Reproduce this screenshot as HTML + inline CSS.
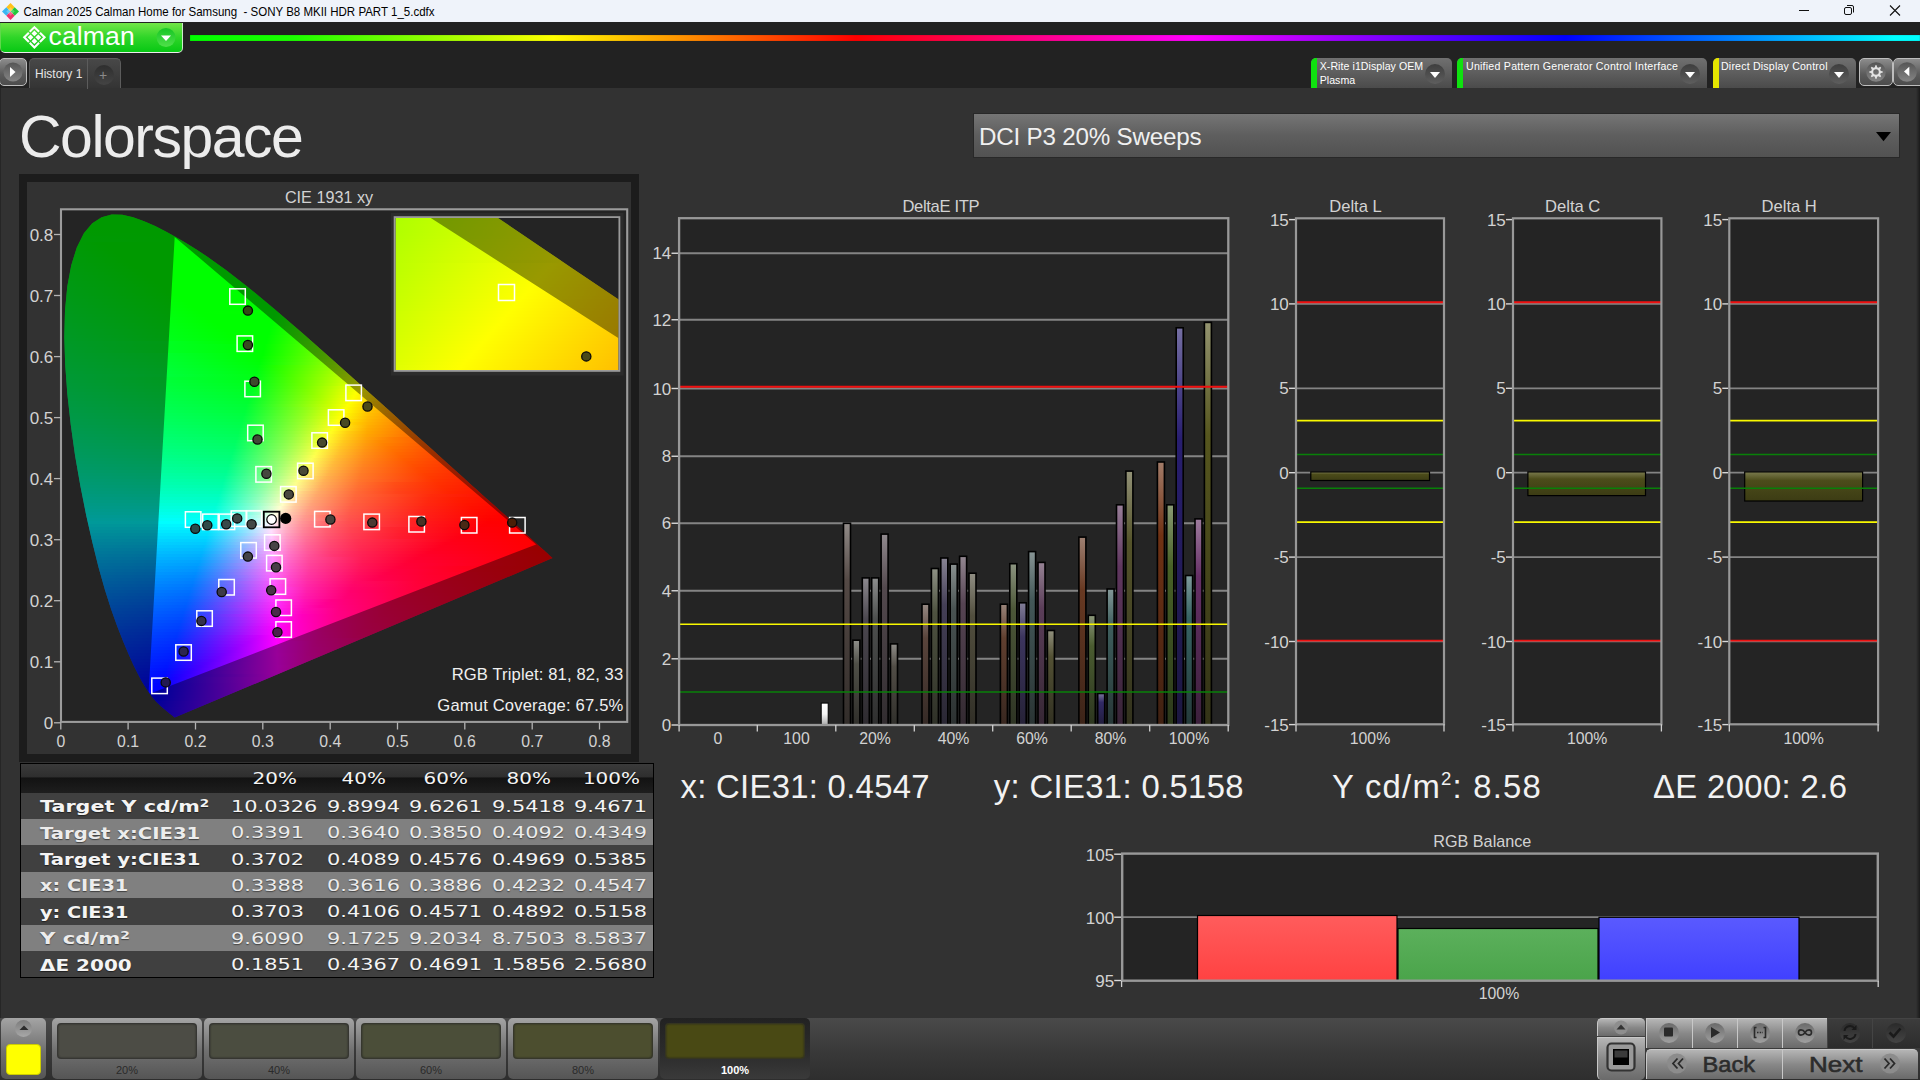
<!DOCTYPE html>
<html lang="en"><head><meta charset="utf-8"><title>Calman 2025 Calman Home for Samsung - SONY B8 MKII HDR PART 1_5.cdfx</title>
<style>
*{box-sizing:border-box}
html,body{margin:0;padding:0}
body{width:1920px;height:1080px;overflow:hidden;position:relative;background:#323232;font-family:"Liberation Sans",sans-serif;color:#eee}
.abs{position:absolute}
#titlebar{left:0;top:0;width:1920px;height:22.400px;background:#eff3fa;color:#000;font-size:12px}
#titlebar .t{position:absolute;left:24px;top:4px;white-space:pre;letter-spacing:0.1px}
#band{left:0;top:22.400px;width:1920px;height:65.600px;background:#222}
#rainbow{left:190px;top:35.200px;width:1730px;height:5.700px;background:linear-gradient(90deg,#0f0 0%,#1cff00 6%,#ff0 21%,#f00 38.500%,#f0f 58%,#00f 79.500%,#0ff 98.500%);box-shadow:0 0 1px rgba(0,0,0,.6) inset}
#calman{left:0;top:23px;width:183px;height:30px;border-radius:0 0 5px 5px;background:linear-gradient(#72e548,#2fd528 50%,#07c814);border-right:1px solid #cfeccb;border-bottom:1px solid #ececec;border-left:1px solid #5fd84a}
#calman .w{position:absolute;left:47.500px;top:-2.500px;font-size:26.500px;color:#fff;letter-spacing:0.150px}
.btn{border:1px solid #bdbdbd;border-radius:5px;background:linear-gradient(#8c8c8c,#5a5a5a 60%,#4c4c4c)}
.tab{top:58px;height:30px;border-radius:5px 5px 0 0;background:linear-gradient(#707070,#4b4b4b);font-size:11.3px;color:#fff;line-height:14px;overflow:hidden}
.tab i{position:absolute;left:0;top:0;bottom:0;width:6px}
.tab span{position:absolute;left:9px;top:1px;white-space:nowrap}
.circ{position:absolute;width:20px;height:20px;border-radius:10px;background:linear-gradient(#3e3e3e,#5e5e5e)}
.circ:after{content:"";position:absolute;left:5px;top:8px;border:5px solid transparent;border-top:6px solid #fff;border-bottom:0}
#hist{left:29px;top:58px;width:92px;height:30px;border:1px solid #5c5c5c;border-bottom:0;border-radius:5px 5px 0 0;background:linear-gradient(#484848,#343434);font-size:12px;color:#e6e6e6}
#heading{left:19px;top:102.800px;font-size:59px;color:#ececec;letter-spacing:-1.500px;white-space:nowrap}
#dd{left:972.500px;top:113px;width:927.500px;height:45px;background:linear-gradient(#757575,#5e5e5e 50%,#525252);border:1px solid #282828;font-size:24.200px;letter-spacing:-0.200px;color:#f0f0f0}
#dd span{position:absolute;left:5.500px;top:8.500px;white-space:nowrap}
#dd:after{content:"";position:absolute;left:1903px;}
svg{position:absolute;left:0;top:0;overflow:visible}
svg text{font-family:"Liberation Sans",sans-serif}
#bottom{left:0;top:1018px;width:1920px;height:62px;background:linear-gradient(#4a4a4a,#3a3a3a 50%,#2e2e2e)}
.sw{top:1018px;width:150px;height:61px;border-radius:5px;background:linear-gradient(#a4a4a4,#6f6f6f 55%,#555);font-size:10.5px;color:#2a2a2a;text-align:center}
.sw b{position:absolute;left:5px;top:5px;width:140px;height:36px;border-radius:4px;box-shadow:0 0 2px #222 inset;border:1px solid rgba(40,40,40,.6)}
.sw span{position:absolute;left:0;width:150px;top:46px;font-size:11px}.sw.sel span{font-weight:bold}
.sw.sel{background:linear-gradient(#222,#2c2c2c 60%,#3a3a3a);color:#fff}
.cb{position:absolute;border-radius:5px 5px 0 0;background:linear-gradient(#b5b5b5,#888 50%,#6a6a6a);border-left:1px solid #c8c8c8;border-top:1px solid #c8c8c8}
.cb.dk{background:linear-gradient(#3c3c3c,#2c2c2c);border-color:#444}
.cb .c{position:absolute;left:50%;top:50%;width:20px;height:20px;margin:-10.500px 0 0 -10.500px;border-radius:10px;background:linear-gradient(#6a6a6a,#a0a0a0)}
.cb.dk .c{background:linear-gradient(#2a2a2a,#444)}

table{border-collapse:collapse}
</style></head><body>
<div id="titlebar" class="abs"></div>
<svg width="1920" height="23" viewBox="0 0 1920 23">
<g transform="translate(10.5,11.5)"><path d="M0-8.5L4.2-4.2L0 0L-4.2-4.2Z" fill="#ffc21a"/><path d="M-8.5 0L-4.2-4.2L0 0L-4.2 4.2Z" fill="#39b6f2"/><path d="M8.5 0L4.2-4.2L0 0L4.2 4.2Z" fill="#22c83a"/><path d="M0 8.5L4.2 4.2L0 0L-4.2 4.2Z" fill="#f0306a"/>
<path d="M0-4.2L4.2 0L0 4.2L-4.2 0Z" fill="#fff" opacity=".25"/></g>
<text x="23.500" y="16" font-size="12.800" fill="#000" textLength="411" lengthAdjust="spacingAndGlyphs" xml:space="preserve">Calman 2025 Calman Home for Samsung  - SONY B8 MKII HDR PART 1_5.cdfx</text>
<path d="M1799 10.5H1809" stroke="#111" stroke-width="1" fill="none"/>
<rect x="1844.5" y="7.5" width="7" height="7" rx="1.5" stroke="#111" fill="none"/><path d="M1847 5.5H1852Q1853.5 5.5 1853.5 7V12.5" stroke="#111" fill="none"/>
<path d="M1890 5.5L1900 15.5M1900 5.5L1890 15.5" stroke="#111" stroke-width="1.1" fill="none"/>
</svg>
<div id="band" class="abs"></div>
<div id="rainbow" class="abs"></div>
<div id="calman" class="abs"><span class="w">calman</span></div>
<svg width="200" height="60" viewBox="0 0 200 60">
<g transform="translate(34.4,37.3) rotate(45)"><rect x="-7.200" y="-7.200" width="14.400" height="14.400" fill="none" stroke="#fff" stroke-width="2.100" stroke-dasharray="13.200 1.200" stroke-dashoffset="6.600"/>
<g fill="#fff"><rect x="-4.800" y="-4.800" width="4.100" height="4.100"/><rect x=".700" y="-4.800" width="4.100" height="4.100"/><rect x="-4.800" y=".700" width="4.100" height="4.100"/><rect x=".700" y=".700" width="4.100" height="4.100"/></g></g>
<defs><linearGradient id="cg" x1="0" y1="0" x2="0" y2="1"><stop offset="0" stop-color="#16c524"/><stop offset="1" stop-color="#4fe04a"/></linearGradient></defs>
<circle cx="166" cy="37.5" r="9.5" fill="url(#cg)"/><path d="M161 35.5H171L166 41Z" fill="#fff"/>
</svg>
<div class="abs btn" style="left:-1px;top:58px;width:28px;height:28px"></div>
<svg width="130" height="90" viewBox="0 0 130 90"><defs><linearGradient id="pc" x1="0" y1="0" x2="0" y2="1"><stop offset="0" stop-color="#555"/><stop offset="1" stop-color="#858585"/></linearGradient></defs><circle cx="13" cy="72" r="9.5" fill="url(#pc)"/><path d="M10 67L15.5 72L10 77Z" fill="#fff"/></svg>
<div id="hist" class="abs"><span style="position:absolute;left:5px;top:8px;white-space:nowrap">History 1</span><span style="position:absolute;left:57px;top:0;width:1px;height:30px;background:#5c5c5c"></span><span style="position:absolute;left:64px;top:6px;width:20px;height:20px;border-radius:10px;background:linear-gradient(#2e2e2e,#444)"></span><span style="position:absolute;left:69px;top:8px;color:#8a8a8a;font-size:14px">+</span></div>
<div class="abs tab" style="left:1311px;width:141px"><i style="background:#0fe20f"></i><div class="circ" style="left:114px;top:6px"></div></div>
<div class="abs tab" style="left:1457px;width:250px"><i style="background:#0fe20f"></i><div class="circ" style="left:223px;top:6px"></div></div>
<div class="abs tab" style="left:1713px;width:143px"><i style="background:#e6e600"></i><div class="circ" style="left:116px;top:6px"></div></div>
<svg width="1920" height="100" viewBox="0 0 1920 100" font-size="10.600" fill="#fff"><text x="1319.700" y="70" textLength="103.500">X-Rite i1Display OEM</text><text x="1319.700" y="84" textLength="35.500">Plasma</text><text x="1466" y="70" textLength="212">Unified Pattern Generator Control Interface</text><text x="1721" y="70" textLength="106.500">Direct Display Control</text></svg>
<div class="abs btn" style="left:1859px;top:58px;width:34px;height:28px"></div>
<div class="abs btn" style="left:1893px;top:58px;width:34px;height:28px"></div>
<svg width="1920" height="100" viewBox="0 0 1920 100"><circle cx="1876" cy="72" r="9.800" fill="url(#pc)"/><path transform="translate(1876,72)" d="M-1.10 -4.77L-0.70 -6.66L0.70 -6.66L1.10 -4.77L2.60 -4.16L4.22 -5.21L5.21 -4.22L4.16 -2.60L4.77 -1.10L6.66 -0.70L6.66 0.70L4.77 1.10L4.16 2.60L5.21 4.22L4.22 5.21L2.60 4.16L1.10 4.77L0.70 6.66L-0.70 6.66L-1.10 4.77L-2.60 4.16L-4.22 5.21L-5.21 4.22L-4.16 2.60L-4.77 1.10L-6.66 0.70L-6.66 -0.70L-4.77 -1.10L-4.16 -2.60L-5.21 -4.22L-4.22 -5.21L-2.60 -4.16Z M2.8 0A2.8 2.8 0 1 0 -2.8 0A2.8 2.8 0 1 0 2.8 0Z" fill="#e2e2e2" fill-rule="evenodd"/>
<circle cx="1907" cy="72" r="9.800" fill="url(#pc)"/><path d="M1909.300 66.800L1904 71.600L1909.300 76.200Z" fill="#fff"/></svg>
<div id="heading" class="abs">Colorspace</div>
<div id="dd" class="abs"><span>DCI P3 20% Sweeps</span></div>
<svg width="1920" height="200" viewBox="0 0 1920 200"><path d="M1876 132H1891L1883.5 141.3Z" fill="#000"/></svg>
<div class="abs" style="left:1916px;top:88px;width:4px;height:930px;background:linear-gradient(90deg,#323232,#1a1a1a)"></div>
<div class="abs" style="left:0;top:88px;width:1px;height:930px;background:#262626"></div>
<svg width="1920" height="1080" viewBox="0 0 1920 1080">
<rect x="19" y="174" width="620" height="588" fill="#1c1c1c"/>
<rect x="27" y="182" width="604" height="572" fill="#323232"/>
<rect x="61" y="209.500" width="566" height="512.500" fill="#242424"/>
<defs><linearGradient id="g0" gradientUnits="userSpaceOnUse" x1="106.7" x2="122.9" y1="0" y2="0"><stop offset="0" stop-color="#0f0"/><stop offset="1" stop-color="#0f0"/></linearGradient>
<linearGradient id="g1" gradientUnits="userSpaceOnUse" x1="97.8" x2="134.8" y1="0" y2="0"><stop offset="0" stop-color="#0f0"/><stop offset="1" stop-color="#0f0"/></linearGradient>
<linearGradient id="g2" gradientUnits="userSpaceOnUse" x1="92.9" x2="143.1" y1="0" y2="0"><stop offset="0" stop-color="#0f0"/><stop offset="1" stop-color="#0f0"/></linearGradient>
<linearGradient id="g3" gradientUnits="userSpaceOnUse" x1="89.2" x2="150.2" y1="0" y2="0"><stop offset="0" stop-color="#0f0"/><stop offset="1" stop-color="#0f0"/></linearGradient>
<linearGradient id="g4" gradientUnits="userSpaceOnUse" x1="86.3" x2="156.5" y1="0" y2="0"><stop offset="0" stop-color="#0f0"/><stop offset="1" stop-color="#0f0"/></linearGradient>
<linearGradient id="g5" gradientUnits="userSpaceOnUse" x1="84.0" x2="162.5" y1="0" y2="0"><stop offset="0" stop-color="#0f0"/><stop offset="1" stop-color="#0f0"/></linearGradient>
<linearGradient id="g6" gradientUnits="userSpaceOnUse" x1="81.8" x2="168.2" y1="0" y2="0"><stop offset="0" stop-color="#00ff02"/><stop offset="1" stop-color="#0f0"/></linearGradient>
<linearGradient id="g7" gradientUnits="userSpaceOnUse" x1="80.0" x2="173.7" y1="0" y2="0"><stop offset="0" stop-color="#00ff04"/><stop offset="1" stop-color="#0f0"/></linearGradient>
<linearGradient id="g8" gradientUnits="userSpaceOnUse" x1="78.3" x2="179.0" y1="0" y2="0"><stop offset="0" stop-color="#00ff06"/><stop offset="1" stop-color="#0f0"/></linearGradient>
<linearGradient id="g9" gradientUnits="userSpaceOnUse" x1="76.9" x2="184.1" y1="0" y2="0"><stop offset="0" stop-color="#00ff08"/><stop offset="1" stop-color="#0f0"/></linearGradient>
<linearGradient id="g10" gradientUnits="userSpaceOnUse" x1="75.5" x2="189.0" y1="0" y2="0"><stop offset="0" stop-color="#00ff0a"/><stop offset="0.257" stop-color="#0f0"/><stop offset="1" stop-color="#0f0"/></linearGradient>
<linearGradient id="g11" gradientUnits="userSpaceOnUse" x1="74.3" x2="193.8" y1="0" y2="0"><stop offset="0" stop-color="#00ff0c"/><stop offset="0.294" stop-color="#0f0"/><stop offset="1" stop-color="#0f0"/></linearGradient>
<linearGradient id="g12" gradientUnits="userSpaceOnUse" x1="73.2" x2="198.4" y1="0" y2="0"><stop offset="0" stop-color="#00ff0d"/><stop offset="0.32" stop-color="#0f0"/><stop offset="1" stop-color="#0f0"/></linearGradient>
<linearGradient id="g13" gradientUnits="userSpaceOnUse" x1="72.1" x2="202.9" y1="0" y2="0"><stop offset="0" stop-color="#00ff0f"/><stop offset="0.346" stop-color="#0f0"/><stop offset="1" stop-color="#0f0"/></linearGradient>
<linearGradient id="g14" gradientUnits="userSpaceOnUse" x1="71.2" x2="207.3" y1="0" y2="0"><stop offset="0" stop-color="#0f1"/><stop offset="0.368" stop-color="#0f0"/><stop offset="1" stop-color="#0f0"/></linearGradient>
<linearGradient id="g15" gradientUnits="userSpaceOnUse" x1="70.3" x2="211.7" y1="0" y2="0"><stop offset="0" stop-color="#00ff13"/><stop offset="0.39" stop-color="#0f0"/><stop offset="1" stop-color="#0f0"/></linearGradient>
<linearGradient id="g16" gradientUnits="userSpaceOnUse" x1="69.5" x2="215.9" y1="0" y2="0"><stop offset="0" stop-color="#00ff14"/><stop offset="0.411" stop-color="#0f0"/><stop offset="1" stop-color="#0f0"/></linearGradient>
<linearGradient id="g17" gradientUnits="userSpaceOnUse" x1="68.7" x2="220.0" y1="0" y2="0"><stop offset="0" stop-color="#00ff16"/><stop offset="0.43" stop-color="#0f0"/><stop offset="1" stop-color="#0f0"/></linearGradient>
<linearGradient id="g18" gradientUnits="userSpaceOnUse" x1="68.0" x2="224.1" y1="0" y2="0"><stop offset="0" stop-color="#00ff18"/><stop offset="0.449" stop-color="#0f0"/><stop offset="1" stop-color="#0f0"/></linearGradient>
<linearGradient id="g19" gradientUnits="userSpaceOnUse" x1="67.4" x2="228.1" y1="0" y2="0"><stop offset="0" stop-color="#00ff19"/><stop offset="0.469" stop-color="#0f0"/><stop offset="1" stop-color="#0f0"/></linearGradient>
<linearGradient id="g20" gradientUnits="userSpaceOnUse" x1="66.8" x2="232.1" y1="0" y2="0"><stop offset="0" stop-color="#00ff1b"/><stop offset="0.485" stop-color="#0f0"/><stop offset="1" stop-color="#0f0"/></linearGradient>
<linearGradient id="g21" gradientUnits="userSpaceOnUse" x1="66.2" x2="236.0" y1="0" y2="0"><stop offset="0" stop-color="#00ff1d"/><stop offset="0.497" stop-color="#0f0"/><stop offset="1" stop-color="#0f0"/></linearGradient>
<linearGradient id="g22" gradientUnits="userSpaceOnUse" x1="65.8" x2="239.8" y1="0" y2="0"><stop offset="0" stop-color="#00ff1e"/><stop offset="0.511" stop-color="#0f0"/><stop offset="1" stop-color="#0f0"/></linearGradient>
<linearGradient id="g23" gradientUnits="userSpaceOnUse" x1="65.3" x2="243.6" y1="0" y2="0"><stop offset="0" stop-color="#00ff20"/><stop offset="0.522" stop-color="#0f0"/><stop offset="1" stop-color="#0f0"/></linearGradient>
<linearGradient id="g24" gradientUnits="userSpaceOnUse" x1="64.8" x2="247.4" y1="0" y2="0"><stop offset="0" stop-color="#00ff21"/><stop offset="0.538" stop-color="#0f0"/><stop offset="1" stop-color="#0f0"/></linearGradient>
<linearGradient id="g25" gradientUnits="userSpaceOnUse" x1="64.5" x2="251.1" y1="0" y2="0"><stop offset="0" stop-color="#00ff23"/><stop offset="0.548" stop-color="#0f0"/><stop offset="1" stop-color="#0f0"/></linearGradient>
<linearGradient id="g26" gradientUnits="userSpaceOnUse" x1="64.1" x2="254.8" y1="0" y2="0"><stop offset="0" stop-color="#00ff25"/><stop offset="0.563" stop-color="#0f0"/><stop offset="1" stop-color="#0f0"/></linearGradient>
<linearGradient id="g27" gradientUnits="userSpaceOnUse" x1="63.8" x2="258.5" y1="0" y2="0"><stop offset="0" stop-color="#00ff26"/><stop offset="0.572" stop-color="#0f0"/><stop offset="1" stop-color="#0f0"/></linearGradient>
<linearGradient id="g28" gradientUnits="userSpaceOnUse" x1="63.5" x2="262.1" y1="0" y2="0"><stop offset="0" stop-color="#00ff28"/><stop offset="0.586" stop-color="#0f0"/><stop offset="1" stop-color="#0f0"/></linearGradient>
<linearGradient id="g29" gradientUnits="userSpaceOnUse" x1="63.3" x2="265.7" y1="0" y2="0"><stop offset="0" stop-color="#00ff2a"/><stop offset="0.594" stop-color="#0f0"/><stop offset="1" stop-color="#0f0"/></linearGradient>
<linearGradient id="g30" gradientUnits="userSpaceOnUse" x1="63.0" x2="269.3" y1="0" y2="0"><stop offset="0" stop-color="#00ff2b"/><stop offset="0.607" stop-color="#0f0"/><stop offset="1" stop-color="#0f0"/></linearGradient>
<linearGradient id="g31" gradientUnits="userSpaceOnUse" x1="62.8" x2="272.8" y1="0" y2="0"><stop offset="0" stop-color="#00ff2d"/><stop offset="0.614" stop-color="#0f0"/><stop offset="1" stop-color="#0f0"/></linearGradient>
<linearGradient id="g32" gradientUnits="userSpaceOnUse" x1="62.6" x2="276.4" y1="0" y2="0"><stop offset="0" stop-color="#00ff2f"/><stop offset="0.624" stop-color="#0f0"/><stop offset="1" stop-color="#0f0"/></linearGradient>
<linearGradient id="g33" gradientUnits="userSpaceOnUse" x1="62.5" x2="279.9" y1="0" y2="0"><stop offset="0" stop-color="#00ff30"/><stop offset="0.636" stop-color="#0f0"/><stop offset="1" stop-color="#03ff00"/></linearGradient>
<linearGradient id="g34" gradientUnits="userSpaceOnUse" x1="62.4" x2="283.4" y1="0" y2="0"><stop offset="0" stop-color="#00ff32"/><stop offset="0.643" stop-color="#0f0"/><stop offset="0.959" stop-color="#0f0"/><stop offset="1" stop-color="#0cff00"/></linearGradient>
<linearGradient id="g35" gradientUnits="userSpaceOnUse" x1="62.2" x2="286.9" y1="0" y2="0"><stop offset="0" stop-color="#00ff34"/><stop offset="0.652" stop-color="#0f0"/><stop offset="0.938" stop-color="#0f0"/><stop offset="1" stop-color="#14ff00"/></linearGradient>
<linearGradient id="g36" gradientUnits="userSpaceOnUse" x1="62.1" x2="290.4" y1="0" y2="0"><stop offset="0" stop-color="#00ff35"/><stop offset="0.662" stop-color="#0f0"/><stop offset="0.921" stop-color="#0f0"/><stop offset="1" stop-color="#1dff00"/></linearGradient>
<linearGradient id="g37" gradientUnits="userSpaceOnUse" x1="62.1" x2="293.9" y1="0" y2="0"><stop offset="0" stop-color="#00ff37"/><stop offset="0.671" stop-color="#0f0"/><stop offset="0.905" stop-color="#0f0"/><stop offset="1" stop-color="#25ff00"/></linearGradient>
<linearGradient id="g38" gradientUnits="userSpaceOnUse" x1="62.0" x2="297.3" y1="0" y2="0"><stop offset="0" stop-color="#00ff39"/><stop offset="0.677" stop-color="#0f0"/><stop offset="0.885" stop-color="#0f0"/><stop offset="1" stop-color="#2dff00"/></linearGradient>
<linearGradient id="g39" gradientUnits="userSpaceOnUse" x1="62.0" x2="300.7" y1="0" y2="0"><stop offset="0" stop-color="#00ff3b"/><stop offset="0.685" stop-color="#0f0"/><stop offset="0.87" stop-color="#0f0"/><stop offset="1" stop-color="#36ff00"/></linearGradient>
<linearGradient id="g40" gradientUnits="userSpaceOnUse" x1="62.0" x2="304.2" y1="0" y2="0"><stop offset="0" stop-color="#00ff3c"/><stop offset="0.694" stop-color="#0f0"/><stop offset="0.855" stop-color="#0f0"/><stop offset="1" stop-color="#3eff00"/></linearGradient>
<linearGradient id="g41" gradientUnits="userSpaceOnUse" x1="61.9" x2="307.6" y1="0" y2="0"><stop offset="0" stop-color="#00ff3e"/><stop offset="0.698" stop-color="#0f0"/><stop offset="0.837" stop-color="#0f0"/><stop offset="1" stop-color="#47ff00"/></linearGradient>
<linearGradient id="g42" gradientUnits="userSpaceOnUse" x1="62.0" x2="311.0" y1="0" y2="0"><stop offset="0" stop-color="#00ff40"/><stop offset="0.707" stop-color="#0f0"/><stop offset="0.823" stop-color="#0f0"/><stop offset="1" stop-color="#4fff00"/></linearGradient>
<linearGradient id="g43" gradientUnits="userSpaceOnUse" x1="62.0" x2="314.4" y1="0" y2="0"><stop offset="0" stop-color="#00ff42"/><stop offset="0.413" stop-color="#0f2"/><stop offset="0.714" stop-color="#0f0"/><stop offset="0.81" stop-color="#0f0"/><stop offset="1" stop-color="#58ff00"/></linearGradient>
<linearGradient id="g44" gradientUnits="userSpaceOnUse" x1="62.1" x2="317.8" y1="0" y2="0"><stop offset="0" stop-color="#0f4"/><stop offset="0.792" stop-color="#0f0"/><stop offset="1" stop-color="#62ff00"/></linearGradient>
<linearGradient id="g45" gradientUnits="userSpaceOnUse" x1="62.1" x2="321.2" y1="0" y2="0"><stop offset="0" stop-color="#00ff46"/><stop offset="0.78" stop-color="#0f0"/><stop offset="1" stop-color="#6bff00"/></linearGradient>
<linearGradient id="g46" gradientUnits="userSpaceOnUse" x1="62.2" x2="324.6" y1="0" y2="0"><stop offset="0" stop-color="#00ff48"/><stop offset="0.767" stop-color="#0f0"/><stop offset="1" stop-color="#75ff00"/></linearGradient>
<linearGradient id="g47" gradientUnits="userSpaceOnUse" x1="62.3" x2="328.0" y1="0" y2="0"><stop offset="0" stop-color="#00ff49"/><stop offset="0.411" stop-color="#00ff29"/><stop offset="0.755" stop-color="#0f0"/><stop offset="1" stop-color="#7fff00"/></linearGradient>
<linearGradient id="g48" gradientUnits="userSpaceOnUse" x1="62.4" x2="331.3" y1="0" y2="0"><stop offset="0" stop-color="#00ff4b"/><stop offset="0.425" stop-color="#00ff29"/><stop offset="0.739" stop-color="#00ff01"/><stop offset="1" stop-color="#89ff00"/></linearGradient>
<linearGradient id="g49" gradientUnits="userSpaceOnUse" x1="62.5" x2="334.7" y1="0" y2="0"><stop offset="0" stop-color="#00ff4d"/><stop offset="0.415" stop-color="#00ff2b"/><stop offset="0.728" stop-color="#00ff04"/><stop offset="1" stop-color="#93ff00"/></linearGradient>
<linearGradient id="g50" gradientUnits="userSpaceOnUse" x1="62.7" x2="338.1" y1="0" y2="0"><stop offset="0" stop-color="#00ff4f"/><stop offset="0.404" stop-color="#00ff2e"/><stop offset="0.716" stop-color="#00ff07"/><stop offset="1" stop-color="#9eff00"/></linearGradient>
<linearGradient id="g51" gradientUnits="userSpaceOnUse" x1="62.8" x2="341.4" y1="0" y2="0"><stop offset="0" stop-color="#00ff51"/><stop offset="0.392" stop-color="#00ff31"/><stop offset="0.701" stop-color="#00ff0b"/><stop offset="0.763" stop-color="#24ff00"/><stop offset="1" stop-color="#af0"/></linearGradient>
<linearGradient id="g52" gradientUnits="userSpaceOnUse" x1="63.0" x2="344.8" y1="0" y2="0"><stop offset="0" stop-color="#00ff53"/><stop offset="0.384" stop-color="#00ff34"/><stop offset="0.69" stop-color="#00ff0e"/><stop offset="0.769" stop-color="#2fff00"/><stop offset="1" stop-color="#b5ff00"/></linearGradient>
<linearGradient id="g53" gradientUnits="userSpaceOnUse" x1="63.2" x2="348.1" y1="0" y2="0"><stop offset="0" stop-color="#0f5"/><stop offset="0.377" stop-color="#00ff36"/><stop offset="0.68" stop-color="#0f1"/><stop offset="0.775" stop-color="#3aff00"/><stop offset="1" stop-color="#c1ff00"/></linearGradient>
<linearGradient id="g54" gradientUnits="userSpaceOnUse" x1="63.4" x2="351.5" y1="0" y2="0"><stop offset="0" stop-color="#00ff58"/><stop offset="0.368" stop-color="#00ff39"/><stop offset="0.67" stop-color="#01ff14"/><stop offset="0.781" stop-color="#46ff00"/><stop offset="1" stop-color="#ceff00"/></linearGradient>
<linearGradient id="g55" gradientUnits="userSpaceOnUse" x1="63.6" x2="354.8" y1="0" y2="0"><stop offset="0" stop-color="#00ff5a"/><stop offset="0.656" stop-color="#00ff17"/><stop offset="0.787" stop-color="#52ff00"/><stop offset="1" stop-color="#daff00"/></linearGradient>
<linearGradient id="g56" gradientUnits="userSpaceOnUse" x1="63.8" x2="358.2" y1="0" y2="0"><stop offset="0" stop-color="#00ff5c"/><stop offset="0.646" stop-color="#00ff1a"/><stop offset="0.789" stop-color="#5cff00"/><stop offset="1" stop-color="#e8ff00"/></linearGradient>
<linearGradient id="g57" gradientUnits="userSpaceOnUse" x1="64.0" x2="361.5" y1="0" y2="0"><stop offset="0" stop-color="#00ff5e"/><stop offset="0.636" stop-color="#00ff1d"/><stop offset="0.795" stop-color="#68ff00"/><stop offset="1" stop-color="#f6ff00"/></linearGradient>
<linearGradient id="g58" gradientUnits="userSpaceOnUse" x1="64.3" x2="364.9" y1="0" y2="0"><stop offset="0" stop-color="#00ff60"/><stop offset="0.627" stop-color="#00ff20"/><stop offset="0.8" stop-color="#75ff00"/><stop offset="0.983" stop-color="#feff00"/><stop offset="1" stop-color="#fffa00"/></linearGradient>
<linearGradient id="g59" gradientUnits="userSpaceOnUse" x1="64.5" x2="368.2" y1="0" y2="0"><stop offset="0" stop-color="#00ff62"/><stop offset="0.617" stop-color="#01ff23"/><stop offset="0.805" stop-color="#83ff00"/><stop offset="0.967" stop-color="#ff0"/><stop offset="1" stop-color="#ffec00"/></linearGradient>
<linearGradient id="g60" gradientUnits="userSpaceOnUse" x1="64.8" x2="371.5" y1="0" y2="0"><stop offset="0" stop-color="#00ff65"/><stop offset="0.605" stop-color="#00ff27"/><stop offset="0.81" stop-color="#90ff00"/><stop offset="0.948" stop-color="#fdff00"/><stop offset="1" stop-color="#ffdf00"/></linearGradient>
<linearGradient id="g61" gradientUnits="userSpaceOnUse" x1="65.1" x2="374.8" y1="0" y2="0"><stop offset="0" stop-color="#00ff67"/><stop offset="0.595" stop-color="#00ff2a"/><stop offset="0.816" stop-color="#9fff00"/><stop offset="0.932" stop-color="#feff00"/><stop offset="1" stop-color="#ffd300"/></linearGradient>
<linearGradient id="g62" gradientUnits="userSpaceOnUse" x1="65.4" x2="378.2" y1="0" y2="0"><stop offset="0" stop-color="#00ff69"/><stop offset="0.587" stop-color="#00ff2d"/><stop offset="0.817" stop-color="#abff00"/><stop offset="0.917" stop-color="#ff0"/><stop offset="1" stop-color="#ffc800"/></linearGradient>
<linearGradient id="g63" gradientUnits="userSpaceOnUse" x1="65.7" x2="381.5" y1="0" y2="0"><stop offset="0" stop-color="#00ff6c"/><stop offset="0.578" stop-color="#00ff30"/><stop offset="0.822" stop-color="#bf0"/><stop offset="0.902" stop-color="#fffe00"/><stop offset="0.962" stop-color="#ffd000"/><stop offset="1" stop-color="#ffbe00"/></linearGradient>
<linearGradient id="g64" gradientUnits="userSpaceOnUse" x1="66.0" x2="384.8" y1="0" y2="0"><stop offset="0" stop-color="#00ff6e"/><stop offset="0.566" stop-color="#00ff34"/><stop offset="0.827" stop-color="#cbff00"/><stop offset="0.884" stop-color="#feff00"/><stop offset="0.953" stop-color="#ffcb00"/><stop offset="1" stop-color="#ffb400"/></linearGradient>
<linearGradient id="g65" gradientUnits="userSpaceOnUse" x1="66.3" x2="388.1" y1="0" y2="0"><stop offset="0" stop-color="#00ff71"/><stop offset="0.558" stop-color="#00ff37"/><stop offset="0.748" stop-color="#94ff15"/><stop offset="0.832" stop-color="#dcff00"/><stop offset="0.869" stop-color="#feff00"/><stop offset="0.941" stop-color="#ffc800"/><stop offset="1" stop-color="#ffab00"/></linearGradient>
<linearGradient id="g66" gradientUnits="userSpaceOnUse" x1="66.6" x2="391.4" y1="0" y2="0"><stop offset="0" stop-color="#00ff73"/><stop offset="0.549" stop-color="#00ff3a"/><stop offset="0.735" stop-color="#94ff1a"/><stop offset="0.855" stop-color="#ff0"/><stop offset="0.929" stop-color="#ffc400"/><stop offset="1" stop-color="#ffa200"/></linearGradient>
<linearGradient id="g67" gradientUnits="userSpaceOnUse" x1="66.9" x2="394.8" y1="0" y2="0"><stop offset="0" stop-color="#00ff76"/><stop offset="0.541" stop-color="#00ff3e"/><stop offset="0.725" stop-color="#96ff1d"/><stop offset="0.838" stop-color="#fdff01"/><stop offset="0.92" stop-color="#ffbf00"/><stop offset="1" stop-color="#f90"/></linearGradient>
<linearGradient id="g68" gradientUnits="userSpaceOnUse" x1="67.3" x2="398.1" y1="0" y2="0"><stop offset="0" stop-color="#00ff78"/><stop offset="0.53" stop-color="#00ff42"/><stop offset="0.706" stop-color="#90ff23"/><stop offset="0.824" stop-color="#feff06"/><stop offset="0.909" stop-color="#ffbc00"/><stop offset="1" stop-color="#ff9100"/></linearGradient>
<linearGradient id="g69" gradientUnits="userSpaceOnUse" x1="67.7" x2="401.4" y1="0" y2="0"><stop offset="0" stop-color="#00ff7b"/><stop offset="0.523" stop-color="#00ff45"/><stop offset="0.697" stop-color="#93ff27"/><stop offset="0.811" stop-color="#ffff0c"/><stop offset="0.847" stop-color="#ffde00"/><stop offset="0.901" stop-color="#ffb700"/><stop offset="1" stop-color="#ff8a00"/></linearGradient>
<linearGradient id="g70" gradientUnits="userSpaceOnUse" x1="68.0" x2="404.7" y1="0" y2="0"><stop offset="0" stop-color="#00ff7d"/><stop offset="0.515" stop-color="#00ff49"/><stop offset="0.685" stop-color="#92ff2c"/><stop offset="0.798" stop-color="#fffe11"/><stop offset="0.851" stop-color="#ffce00"/><stop offset="0.89" stop-color="#ffb400"/><stop offset="1" stop-color="#ff8300"/></linearGradient>
<linearGradient id="g71" gradientUnits="userSpaceOnUse" x1="68.4" x2="408.0" y1="0" y2="0"><stop offset="0" stop-color="#00ff80"/><stop offset="0.507" stop-color="#00ff4d"/><stop offset="0.676" stop-color="#95ff30"/><stop offset="0.782" stop-color="#feff17"/><stop offset="0.882" stop-color="#ffaf00"/><stop offset="1" stop-color="#ff7c00"/></linearGradient>
<linearGradient id="g72" gradientUnits="userSpaceOnUse" x1="68.8" x2="411.4" y1="0" y2="0"><stop offset="0" stop-color="#00ff83"/><stop offset="0.497" stop-color="#00ff51"/><stop offset="0.658" stop-color="#8fff35"/><stop offset="0.769" stop-color="#ffff1c"/><stop offset="0.871" stop-color="#ffac00"/><stop offset="1" stop-color="#ff7500"/></linearGradient>
<linearGradient id="g73" gradientUnits="userSpaceOnUse" x1="69.2" x2="414.7" y1="0" y2="0"><stop offset="0" stop-color="#00ff86"/><stop offset="0.49" stop-color="#00ff54"/><stop offset="0.646" stop-color="#8fff3a"/><stop offset="0.757" stop-color="#fffe21"/><stop offset="0.806" stop-color="#ffcf10"/><stop offset="0.864" stop-color="#ffa800"/><stop offset="1" stop-color="#ff6f00"/></linearGradient>
<linearGradient id="g74" gradientUnits="userSpaceOnUse" x1="69.6" x2="418.0" y1="0" y2="0"><stop offset="0" stop-color="#00ff89"/><stop offset="0.483" stop-color="#00ff58"/><stop offset="0.641" stop-color="#94ff3e"/><stop offset="0.741" stop-color="#feff27"/><stop offset="0.793" stop-color="#ffce15"/><stop offset="0.853" stop-color="#ffa503"/><stop offset="1" stop-color="#ff6900"/></linearGradient>
<linearGradient id="g75" gradientUnits="userSpaceOnUse" x1="70.0" x2="421.3" y1="0" y2="0"><stop offset="0" stop-color="#00ff8c"/><stop offset="0.476" stop-color="#01ff5c"/><stop offset="0.63" stop-color="#94ff43"/><stop offset="0.729" stop-color="#ffff2d"/><stop offset="0.781" stop-color="#ffcd19"/><stop offset="0.843" stop-color="#ffa207"/><stop offset="0.923" stop-color="#ff7b00"/><stop offset="1" stop-color="#ff6300"/></linearGradient>
<linearGradient id="g76" gradientUnits="userSpaceOnUse" x1="70.4" x2="424.7" y1="0" y2="0"><stop offset="0" stop-color="#00ff8f"/><stop offset="0.466" stop-color="#00ff61"/><stop offset="0.613" stop-color="#8eff49"/><stop offset="0.718" stop-color="#fffe32"/><stop offset="0.771" stop-color="#ffc91c"/><stop offset="0.836" stop-color="#ff9d09"/><stop offset="0.873" stop-color="#ff8a00"/><stop offset="1" stop-color="#ff5e00"/></linearGradient>
<linearGradient id="g77" gradientUnits="userSpaceOnUse" x1="70.8" x2="428.0" y1="0" y2="0"><stop offset="0" stop-color="#00ff92"/><stop offset="0.459" stop-color="#00ff65"/><stop offset="0.608" stop-color="#94ff4d"/><stop offset="0.703" stop-color="#feff38"/><stop offset="0.759" stop-color="#ffc821"/><stop offset="0.826" stop-color="#ff9a0d"/><stop offset="0.877" stop-color="#ff8100"/><stop offset="1" stop-color="#ff5800"/></linearGradient>
<linearGradient id="g78" gradientUnits="userSpaceOnUse" x1="71.3" x2="431.3" y1="0" y2="0"><stop offset="0" stop-color="#00ff95"/><stop offset="0.453" stop-color="#00ff69"/><stop offset="0.597" stop-color="#93ff52"/><stop offset="0.692" stop-color="#ffff3e"/><stop offset="0.747" stop-color="#ffc625"/><stop offset="0.817" stop-color="#ff9710"/><stop offset="0.881" stop-color="#ff7800"/><stop offset="1" stop-color="#ff5300"/></linearGradient>
<linearGradient id="g79" gradientUnits="userSpaceOnUse" x1="71.7" x2="434.7" y1="0" y2="0"><stop offset="0" stop-color="#00ff98"/><stop offset="0.445" stop-color="#00ff6e"/><stop offset="0.588" stop-color="#95ff57"/><stop offset="0.677" stop-color="#fcff44"/><stop offset="0.74" stop-color="#ffc128"/><stop offset="0.809" stop-color="#ff9312"/><stop offset="0.884" stop-color="#ff7100"/><stop offset="1" stop-color="#ff4e00"/></linearGradient>
<linearGradient id="g80" gradientUnits="userSpaceOnUse" x1="72.2" x2="438.0" y1="0" y2="0"><stop offset="0" stop-color="#00ff9b"/><stop offset="0.438" stop-color="#01ff72"/><stop offset="0.578" stop-color="#95ff5c"/><stop offset="0.666" stop-color="#fdff4a"/><stop offset="0.729" stop-color="#ffc02c"/><stop offset="0.8" stop-color="#ff9015"/><stop offset="0.888" stop-color="#ff6900"/><stop offset="1" stop-color="#ff4900"/></linearGradient>
<linearGradient id="g81" gradientUnits="userSpaceOnUse" x1="72.6" x2="441.3" y1="0" y2="0"><stop offset="0" stop-color="#00ff9e"/><stop offset="0.429" stop-color="#0f7"/><stop offset="0.565" stop-color="#92ff62"/><stop offset="0.655" stop-color="#ffff50"/><stop offset="0.715" stop-color="#ffc031"/><stop offset="0.791" stop-color="#ff8d18"/><stop offset="0.889" stop-color="#ff6300"/><stop offset="1" stop-color="#ff4500"/></linearGradient>
<linearGradient id="g82" gradientUnits="userSpaceOnUse" x1="73.1" x2="444.6" y1="0" y2="0"><stop offset="0" stop-color="#00ffa2"/><stop offset="0.423" stop-color="#00ff7b"/><stop offset="0.558" stop-color="#95ff67"/><stop offset="0.642" stop-color="#fcff57"/><stop offset="0.709" stop-color="#ffba34"/><stop offset="0.784" stop-color="#ff891a"/><stop offset="0.892" stop-color="#ff5c00"/><stop offset="1" stop-color="#ff4000"/></linearGradient>
<linearGradient id="g83" gradientUnits="userSpaceOnUse" x1="73.6" x2="448.0" y1="0" y2="0"><stop offset="0" stop-color="#00ffa5"/><stop offset="0.417" stop-color="#01ff80"/><stop offset="0.548" stop-color="#95ff6d"/><stop offset="0.631" stop-color="#feff5d"/><stop offset="0.695" stop-color="#ffbb39"/><stop offset="0.775" stop-color="#ff861c"/><stop offset="0.896" stop-color="#f50"/><stop offset="1" stop-color="#ff3c00"/></linearGradient>
<linearGradient id="g84" gradientUnits="userSpaceOnUse" x1="74.1" x2="451.3" y1="0" y2="0"><stop offset="0" stop-color="#00ffa9"/><stop offset="0.408" stop-color="#00ff85"/><stop offset="0.536" stop-color="#91ff73"/><stop offset="0.621" stop-color="#ffff63"/><stop offset="0.684" stop-color="#ffba3d"/><stop offset="0.767" stop-color="#ff831f"/><stop offset="0.899" stop-color="#ff4f00"/><stop offset="1" stop-color="#ff3800"/></linearGradient>
<linearGradient id="g85" gradientUnits="userSpaceOnUse" x1="74.6" x2="454.6" y1="0" y2="0"><stop offset="0" stop-color="#00ffac"/><stop offset="0.404" stop-color="#01ff8a"/><stop offset="0.53" stop-color="#96ff78"/><stop offset="0.609" stop-color="#ffff6a"/><stop offset="0.673" stop-color="#ffb942"/><stop offset="0.757" stop-color="#ff8022"/><stop offset="0.902" stop-color="#ff4900"/><stop offset="1" stop-color="#ff3400"/></linearGradient>
<linearGradient id="g86" gradientUnits="userSpaceOnUse" x1="75.1" x2="457.9" y1="0" y2="0"><stop offset="0" stop-color="#00ffb0"/><stop offset="0.395" stop-color="#00ff8f"/><stop offset="0.516" stop-color="#90ff7f"/><stop offset="0.597" stop-color="#fdff71"/><stop offset="0.665" stop-color="#ffb545"/><stop offset="0.749" stop-color="#ff7d25"/><stop offset="0.903" stop-color="#ff4500"/><stop offset="1" stop-color="#ff3000"/></linearGradient>
<linearGradient id="g87" gradientUnits="userSpaceOnUse" x1="75.6" x2="461.2" y1="0" y2="0"><stop offset="0" stop-color="#00ffb4"/><stop offset="0.39" stop-color="#00ff95"/><stop offset="0.512" stop-color="#96ff84"/><stop offset="0.587" stop-color="#feff77"/><stop offset="0.655" stop-color="#ffb34a"/><stop offset="0.74" stop-color="#ff7a27"/><stop offset="0.906" stop-color="#ff3f00"/><stop offset="1" stop-color="#ff2c00"/></linearGradient>
<linearGradient id="g88" gradientUnits="userSpaceOnUse" x1="76.2" x2="464.5" y1="0" y2="0"><stop offset="0" stop-color="#00ffb8"/><stop offset="0.381" stop-color="#00ff9a"/><stop offset="0.495" stop-color="#8cff8c"/><stop offset="0.575" stop-color="#fcff7f"/><stop offset="0.644" stop-color="#ffb14e"/><stop offset="0.732" stop-color="#ff782a"/><stop offset="0.91" stop-color="#ff3a00"/><stop offset="1" stop-color="#ff2900"/></linearGradient>
<linearGradient id="g89" gradientUnits="userSpaceOnUse" x1="76.7" x2="467.8" y1="0" y2="0"><stop offset="0" stop-color="#00ffbc"/><stop offset="0.376" stop-color="#00ffa0"/><stop offset="0.491" stop-color="#93ff91"/><stop offset="0.565" stop-color="#feff86"/><stop offset="0.634" stop-color="#ffb053"/><stop offset="0.724" stop-color="#ff752c"/><stop offset="0.913" stop-color="#ff3500"/><stop offset="1" stop-color="#ff2500"/></linearGradient>
<linearGradient id="g90" gradientUnits="userSpaceOnUse" x1="77.3" x2="471.2" y1="0" y2="0"><stop offset="0" stop-color="#00ffc0"/><stop offset="0.369" stop-color="#00ffa5"/><stop offset="0.478" stop-color="#8eff99"/><stop offset="0.555" stop-color="#fdff8d"/><stop offset="0.623" stop-color="#ffaf58"/><stop offset="0.715" stop-color="#ff722f"/><stop offset="0.804" stop-color="#ff4e16"/><stop offset="0.916" stop-color="#ff3000"/><stop offset="1" stop-color="#f20"/></linearGradient>
<linearGradient id="g91" gradientUnits="userSpaceOnUse" x1="77.8" x2="474.5" y1="0" y2="0"><stop offset="0" stop-color="#00ffc4"/><stop offset="0.364" stop-color="#00ffab"/><stop offset="0.475" stop-color="#95ff9f"/><stop offset="0.545" stop-color="#ffff94"/><stop offset="0.614" stop-color="#ffad5c"/><stop offset="0.707" stop-color="#ff6f32"/><stop offset="0.801" stop-color="#ff4a17"/><stop offset="0.917" stop-color="#ff2c00"/><stop offset="1" stop-color="#ff1e00"/></linearGradient>
<linearGradient id="g92" gradientUnits="userSpaceOnUse" x1="78.4" x2="477.8" y1="0" y2="0"><stop offset="0" stop-color="#00ffc8"/><stop offset="0.358" stop-color="#01ffb1"/><stop offset="0.466" stop-color="#95ffa6"/><stop offset="0.534" stop-color="#fdff9c"/><stop offset="0.607" stop-color="#ffa95f"/><stop offset="0.699" stop-color="#ff6c34"/><stop offset="0.797" stop-color="#ff4618"/><stop offset="0.92" stop-color="#ff2800"/><stop offset="1" stop-color="#ff1b00"/></linearGradient>
<linearGradient id="g93" gradientUnits="userSpaceOnUse" x1="78.9" x2="481.1" y1="0" y2="0"><stop offset="0" stop-color="#0fc"/><stop offset="0.351" stop-color="#00ffb7"/><stop offset="0.455" stop-color="#91ffad"/><stop offset="0.525" stop-color="#ffffa4"/><stop offset="0.557" stop-color="#ffd182"/><stop offset="0.595" stop-color="#ffa966"/><stop offset="0.689" stop-color="#ff6a37"/><stop offset="0.791" stop-color="#ff431a"/><stop offset="0.923" stop-color="#ff2400"/><stop offset="1" stop-color="#ff1800"/></linearGradient>
<linearGradient id="g94" gradientUnits="userSpaceOnUse" x1="79.5" x2="484.5" y1="0" y2="0"><stop offset="0" stop-color="#00ffd1"/><stop offset="0.344" stop-color="#00ffbe"/><stop offset="0.446" stop-color="#8fffb5"/><stop offset="0.515" stop-color="#feffac"/><stop offset="0.547" stop-color="#ffd089"/><stop offset="0.584" stop-color="#ffa86b"/><stop offset="0.681" stop-color="#ff683a"/><stop offset="0.869" stop-color="#ff2b0a"/><stop offset="1" stop-color="#ff1400"/></linearGradient>
<linearGradient id="g95" gradientUnits="userSpaceOnUse" x1="80.1" x2="487.8" y1="0" y2="0"><stop offset="0" stop-color="#00ffd6"/><stop offset="0.339" stop-color="#00ffc4"/><stop offset="0.437" stop-color="#8fffbc"/><stop offset="0.506" stop-color="#fffeb4"/><stop offset="0.538" stop-color="#ffce8f"/><stop offset="0.575" stop-color="#ffa670"/><stop offset="0.673" stop-color="#ff653c"/><stop offset="0.855" stop-color="#ff2a0d"/><stop offset="0.929" stop-color="#ff1c00"/><stop offset="1" stop-color="#f10"/></linearGradient>
<linearGradient id="g96" gradientUnits="userSpaceOnUse" x1="80.7" x2="491.1" y1="0" y2="0"><stop offset="0" stop-color="#00ffda"/><stop offset="0.334" stop-color="#01ffcb"/><stop offset="0.498" stop-color="#fffcbb"/><stop offset="0.529" stop-color="#ffcc94"/><stop offset="0.568" stop-color="#ffa273"/><stop offset="0.666" stop-color="#ff623f"/><stop offset="0.846" stop-color="#ff280f"/><stop offset="0.932" stop-color="#ff1800"/><stop offset="1" stop-color="#ff0e00"/></linearGradient>
<linearGradient id="g97" gradientUnits="userSpaceOnUse" x1="81.3" x2="494.4" y1="0" y2="0"><stop offset="0" stop-color="#00ffdf"/><stop offset="0.327" stop-color="#00ffd2"/><stop offset="0.421" stop-color="#8fffcc"/><stop offset="0.487" stop-color="#fffec5"/><stop offset="0.518" stop-color="#ffcd9d"/><stop offset="0.557" stop-color="#ffa279"/><stop offset="0.659" stop-color="#ff5f41"/><stop offset="0.835" stop-color="#ff2711"/><stop offset="0.935" stop-color="#ff1400"/><stop offset="1" stop-color="#ff0b00"/></linearGradient>
<linearGradient id="g98" gradientUnits="userSpaceOnUse" x1="81.9" x2="497.8" y1="0" y2="0"><stop offset="0" stop-color="#00ffe4"/><stop offset="0.32" stop-color="#00ffd9"/><stop offset="0.412" stop-color="#8dffd4"/><stop offset="0.477" stop-color="#fffecf"/><stop offset="0.508" stop-color="#ffcca4"/><stop offset="0.547" stop-color="#ffa17f"/><stop offset="0.648" stop-color="#ff5e45"/><stop offset="0.824" stop-color="#ff2514"/><stop offset="0.937" stop-color="#ff1000"/><stop offset="1" stop-color="#ff0800"/></linearGradient>
<linearGradient id="g99" gradientUnits="userSpaceOnUse" x1="82.5" x2="501.1" y1="0" y2="0"><stop offset="0" stop-color="#00ffe9"/><stop offset="0.316" stop-color="#00ffe0"/><stop offset="0.469" stop-color="#fffcd6"/><stop offset="0.5" stop-color="#ffcaaa"/><stop offset="0.538" stop-color="#ff9f84"/><stop offset="0.641" stop-color="#ff5b47"/><stop offset="0.816" stop-color="#ff2316"/><stop offset="0.938" stop-color="#ff0d00"/><stop offset="1" stop-color="#ff0500"/></linearGradient>
<linearGradient id="g100" gradientUnits="userSpaceOnUse" x1="83.1" x2="504.4" y1="0" y2="0"><stop offset="0" stop-color="#0fe"/><stop offset="0.311" stop-color="#01ffe8"/><stop offset="0.399" stop-color="#92ffe5"/><stop offset="0.458" stop-color="#fffee2"/><stop offset="0.492" stop-color="#ffc8b0"/><stop offset="0.53" stop-color="#ff9d89"/><stop offset="0.632" stop-color="#ff594a"/><stop offset="0.808" stop-color="#ff2117"/><stop offset="0.941" stop-color="#ff0a00"/><stop offset="1" stop-color="#ff0200"/></linearGradient>
<linearGradient id="g101" gradientUnits="userSpaceOnUse" x1="83.8" x2="507.8" y1="0" y2="0"><stop offset="0" stop-color="#00fff4"/><stop offset="0.304" stop-color="#00fff0"/><stop offset="0.45" stop-color="#fffcea"/><stop offset="0.483" stop-color="#ffc5b6"/><stop offset="0.521" stop-color="#ff9a8d"/><stop offset="0.568" stop-color="#ff756a"/><stop offset="0.627" stop-color="#ff554c"/><stop offset="0.802" stop-color="#ff1f19"/><stop offset="0.943" stop-color="#ff0600"/><stop offset="1" stop-color="#f00"/></linearGradient>
<linearGradient id="g102" gradientUnits="userSpaceOnUse" x1="84.4" x2="511.1" y1="0" y2="0"><stop offset="0" stop-color="#00fffa"/><stop offset="0.298" stop-color="#00fff8"/><stop offset="0.378" stop-color="#88fff7"/><stop offset="0.441" stop-color="#fffcf4"/><stop offset="0.474" stop-color="#ffc5be"/><stop offset="0.514" stop-color="#ff9791"/><stop offset="0.62" stop-color="#ff524e"/><stop offset="0.793" stop-color="#ff1d1a"/><stop offset="0.946" stop-color="#ff0200"/><stop offset="1" stop-color="#f00"/></linearGradient>
<linearGradient id="g103" gradientUnits="userSpaceOnUse" x1="85.1" x2="514.4" y1="0" y2="0"><stop offset="0" stop-color="#0ff"/><stop offset="0.294" stop-color="#00feff"/><stop offset="0.434" stop-color="#fffafc"/><stop offset="0.466" stop-color="#ffc2c4"/><stop offset="0.506" stop-color="#ff9496"/><stop offset="0.555" stop-color="#ff6e70"/><stop offset="0.613" stop-color="#ff4f50"/><stop offset="0.793" stop-color="#ff191b"/><stop offset="0.937" stop-color="#ff0002"/><stop offset="1" stop-color="#f00"/></linearGradient>
<linearGradient id="g104" gradientUnits="userSpaceOnUse" x1="85.7" x2="517.7" y1="0" y2="0"><stop offset="0" stop-color="#00f9ff"/><stop offset="0.287" stop-color="#00f5ff"/><stop offset="0.37" stop-color="#8ff4ff"/><stop offset="0.428" stop-color="#fff2ff"/><stop offset="0.461" stop-color="#ffbcc7"/><stop offset="0.5" stop-color="#ff9099"/><stop offset="0.549" stop-color="#ff6b72"/><stop offset="0.609" stop-color="#ff4b52"/><stop offset="0.803" stop-color="#ff1419"/><stop offset="0.917" stop-color="#ff0005"/><stop offset="1" stop-color="#f00"/></linearGradient>
<linearGradient id="g105" gradientUnits="userSpaceOnUse" x1="86.4" x2="521.1" y1="0" y2="0"><stop offset="0" stop-color="#00f3ff"/><stop offset="0.283" stop-color="#01edff"/><stop offset="0.426" stop-color="#ffe5fb"/><stop offset="0.459" stop-color="#ffb2c5"/><stop offset="0.5" stop-color="#ff8696"/><stop offset="0.548" stop-color="#ff6371"/><stop offset="0.608" stop-color="#ff4551"/><stop offset="0.703" stop-color="#ff2630"/><stop offset="0.825" stop-color="#ff0c15"/><stop offset="0.896" stop-color="#ff0009"/><stop offset="1" stop-color="#f00"/></linearGradient>
<linearGradient id="g106" gradientUnits="userSpaceOnUse" x1="87.1" x2="524.4" y1="0" y2="0"><stop offset="0" stop-color="#0ef"/><stop offset="0.277" stop-color="#00e6ff"/><stop offset="0.362" stop-color="#8fe2ff"/><stop offset="0.421" stop-color="#ffdefe"/><stop offset="0.453" stop-color="#ffadc8"/><stop offset="0.494" stop-color="#ff8299"/><stop offset="0.545" stop-color="#ff5e72"/><stop offset="0.604" stop-color="#ff4252"/><stop offset="0.719" stop-color="#ff1e2c"/><stop offset="0.874" stop-color="#ff000c"/><stop offset="1" stop-color="#f00"/></linearGradient>
<linearGradient id="g107" gradientUnits="userSpaceOnUse" x1="87.8" x2="527.7" y1="0" y2="0"><stop offset="0" stop-color="#00e8ff"/><stop offset="0.271" stop-color="#00deff"/><stop offset="0.358" stop-color="#8fd9ff"/><stop offset="0.417" stop-color="#ffd5ff"/><stop offset="0.451" stop-color="#ffa3c6"/><stop offset="0.492" stop-color="#ff7b98"/><stop offset="0.542" stop-color="#ff5972"/><stop offset="0.601" stop-color="#ff3d53"/><stop offset="0.711" stop-color="#ff1c2e"/><stop offset="0.854" stop-color="#ff0010"/><stop offset="1" stop-color="#f00"/></linearGradient>
<linearGradient id="g108" gradientUnits="userSpaceOnUse" x1="88.5" x2="531.0" y1="0" y2="0"><stop offset="0" stop-color="#00e3ff"/><stop offset="0.267" stop-color="#00d7ff"/><stop offset="0.414" stop-color="#ffcafe"/><stop offset="0.448" stop-color="#ff9bc6"/><stop offset="0.489" stop-color="#ff7499"/><stop offset="0.538" stop-color="#ff5473"/><stop offset="0.6" stop-color="#ff3953"/><stop offset="0.701" stop-color="#ff1b30"/><stop offset="0.835" stop-color="#ff0013"/><stop offset="1" stop-color="#f00"/></linearGradient>
<linearGradient id="g109" gradientUnits="userSpaceOnUse" x1="89.2" x2="534.4" y1="0" y2="0"><stop offset="0" stop-color="#0df"/><stop offset="0.261" stop-color="#00d0ff"/><stop offset="0.411" stop-color="#ffc0fc"/><stop offset="0.445" stop-color="#ff93c6"/><stop offset="0.488" stop-color="#ff6d97"/><stop offset="0.539" stop-color="#ff4d71"/><stop offset="0.6" stop-color="#ff3352"/><stop offset="0.816" stop-color="#ff0017"/><stop offset="1" stop-color="#f00"/></linearGradient>
<linearGradient id="g110" gradientUnits="userSpaceOnUse" x1="89.9" x2="537.7" y1="0" y2="0"><stop offset="0" stop-color="#00d8ff"/><stop offset="0.257" stop-color="#01c9ff"/><stop offset="0.407" stop-color="#ffb8fd"/><stop offset="0.441" stop-color="#ff8dc7"/><stop offset="0.483" stop-color="#ff6898"/><stop offset="0.535" stop-color="#ff4972"/><stop offset="0.595" stop-color="#ff3053"/><stop offset="0.794" stop-color="#ff001b"/><stop offset="1" stop-color="#f00"/></linearGradient>
<linearGradient id="g111" gradientUnits="userSpaceOnUse" x1="90.6" x2="541.0" y1="0" y2="0"><stop offset="0" stop-color="#00d3ff"/><stop offset="0.251" stop-color="#00c2ff"/><stop offset="0.342" stop-color="#92b9ff"/><stop offset="0.402" stop-color="#ffb1ff"/><stop offset="0.438" stop-color="#ff85c6"/><stop offset="0.48" stop-color="#ff6299"/><stop offset="0.531" stop-color="#ff4573"/><stop offset="0.593" stop-color="#ff2c53"/><stop offset="0.776" stop-color="#ff001f"/><stop offset="1" stop-color="#f00"/></linearGradient>
<linearGradient id="g112" gradientUnits="userSpaceOnUse" x1="91.3" x2="544.3" y1="0" y2="0"><stop offset="0" stop-color="#00cdff"/><stop offset="0.245" stop-color="#00bcff"/><stop offset="0.333" stop-color="#8bb2ff"/><stop offset="0.4" stop-color="#ffa8fe"/><stop offset="0.435" stop-color="#ff7ec6"/><stop offset="0.477" stop-color="#ff5d99"/><stop offset="0.528" stop-color="#ff4074"/><stop offset="0.592" stop-color="#ff2853"/><stop offset="0.757" stop-color="#f02"/><stop offset="1" stop-color="#f00"/></linearGradient>
<linearGradient id="g113" gradientUnits="userSpaceOnUse" x1="92.0" x2="547.6" y1="0" y2="0"><stop offset="0" stop-color="#00c8ff"/><stop offset="0.242" stop-color="#01b5ff"/><stop offset="0.336" stop-color="#96aaff"/><stop offset="0.396" stop-color="#ffa0fe"/><stop offset="0.431" stop-color="#ff78c7"/><stop offset="0.473" stop-color="#ff589b"/><stop offset="0.523" stop-color="#ff3c75"/><stop offset="0.587" stop-color="#ff2455"/><stop offset="0.738" stop-color="#ff0026"/><stop offset="1" stop-color="#f00"/></linearGradient>
<linearGradient id="g114" gradientUnits="userSpaceOnUse" x1="92.8" x2="551.0" y1="0" y2="0"><stop offset="0" stop-color="#00c3ff"/><stop offset="0.236" stop-color="#00afff"/><stop offset="0.393" stop-color="#ff97fd"/><stop offset="0.428" stop-color="#ff71c7"/><stop offset="0.472" stop-color="#ff5199"/><stop offset="0.524" stop-color="#ff3673"/><stop offset="0.587" stop-color="#ff2054"/><stop offset="0.718" stop-color="#ff002b"/><stop offset="1" stop-color="#f00"/></linearGradient>
<linearGradient id="g115" gradientUnits="userSpaceOnUse" x1="93.5" x2="554.3" y1="0" y2="0"><stop offset="0" stop-color="#00beff"/><stop offset="0.23" stop-color="#00a9ff"/><stop offset="0.322" stop-color="#8c9dff"/><stop offset="0.389" stop-color="#ff90fe"/><stop offset="0.424" stop-color="#ff6cc8"/><stop offset="0.467" stop-color="#ff4d9a"/><stop offset="0.583" stop-color="#ff1d55"/><stop offset="0.7" stop-color="#ff002f"/><stop offset="1" stop-color="#f00"/></linearGradient>
<linearGradient id="g116" gradientUnits="userSpaceOnUse" x1="94.3" x2="554.3" y1="0" y2="0"><stop offset="0" stop-color="#00b9ff"/><stop offset="0.229" stop-color="#01a3ff"/><stop offset="0.327" stop-color="#9795ff"/><stop offset="0.388" stop-color="#ff89ff"/><stop offset="0.423" stop-color="#ff66c9"/><stop offset="0.466" stop-color="#ff489c"/><stop offset="0.582" stop-color="#ff1a56"/><stop offset="0.686" stop-color="#ff0034"/><stop offset="1" stop-color="#f00"/></linearGradient>
<linearGradient id="g117" gradientUnits="userSpaceOnUse" x1="95.1" x2="549.4" y1="0" y2="0"><stop offset="0" stop-color="#00b4ff"/><stop offset="0.227" stop-color="#009eff"/><stop offset="0.392" stop-color="#ff81fd"/><stop offset="0.427" stop-color="#ff60c9"/><stop offset="0.471" stop-color="#ff439c"/><stop offset="0.588" stop-color="#ff1657"/><stop offset="0.681" stop-color="#ff0038"/><stop offset="1" stop-color="#ff0002"/></linearGradient>
<linearGradient id="g118" gradientUnits="userSpaceOnUse" x1="95.8" x2="542.3" y1="0" y2="0"><stop offset="0" stop-color="#00b0ff"/><stop offset="0.226" stop-color="#0098ff"/><stop offset="0.327" stop-color="#9089ff"/><stop offset="0.397" stop-color="#ff7bff"/><stop offset="0.433" stop-color="#ff5bcb"/><stop offset="0.478" stop-color="#ff3f9e"/><stop offset="0.592" stop-color="#ff155b"/><stop offset="0.677" stop-color="#ff003d"/><stop offset="0.823" stop-color="#ff001d"/><stop offset="1" stop-color="#ff0005"/></linearGradient>
<linearGradient id="g119" gradientUnits="userSpaceOnUse" x1="96.6" x2="535.2" y1="0" y2="0"><stop offset="0" stop-color="#00abff"/><stop offset="0.228" stop-color="#0193ff"/><stop offset="0.404" stop-color="#ff72fc"/><stop offset="0.441" stop-color="#ff54ca"/><stop offset="0.484" stop-color="#ff3b9f"/><stop offset="0.6" stop-color="#ff125c"/><stop offset="0.674" stop-color="#ff0043"/><stop offset="0.82" stop-color="#ff0021"/><stop offset="1" stop-color="#ff0008"/></linearGradient>
<linearGradient id="g120" gradientUnits="userSpaceOnUse" x1="97.4" x2="528.0" y1="0" y2="0"><stop offset="0" stop-color="#00a6ff"/><stop offset="0.228" stop-color="#008dff"/><stop offset="0.409" stop-color="#ff6cfd"/><stop offset="0.447" stop-color="#ff4fcb"/><stop offset="0.491" stop-color="#ff37a1"/><stop offset="0.605" stop-color="#ff105f"/><stop offset="0.67" stop-color="#ff0048"/><stop offset="0.772" stop-color="#ff002e"/><stop offset="1" stop-color="#ff000b"/></linearGradient>
<linearGradient id="g121" gradientUnits="userSpaceOnUse" x1="98.3" x2="520.9" y1="0" y2="0"><stop offset="0" stop-color="#00a1ff"/><stop offset="0.227" stop-color="#08f"/><stop offset="0.341" stop-color="#9476ff"/><stop offset="0.415" stop-color="#ff66fe"/><stop offset="0.453" stop-color="#ff4acc"/><stop offset="0.495" stop-color="#ff34a4"/><stop offset="0.611" stop-color="#ff0d62"/><stop offset="0.666" stop-color="#ff004e"/><stop offset="0.777" stop-color="#ff0031"/><stop offset="1" stop-color="#ff000e"/></linearGradient>
<linearGradient id="g122" gradientUnits="userSpaceOnUse" x1="99.1" x2="513.8" y1="0" y2="0"><stop offset="0" stop-color="#009dff"/><stop offset="0.227" stop-color="#0083ff"/><stop offset="0.343" stop-color="#9170ff"/><stop offset="0.42" stop-color="#fe60ff"/><stop offset="0.459" stop-color="#ff45ce"/><stop offset="0.502" stop-color="#ff30a6"/><stop offset="0.618" stop-color="#ff0b64"/><stop offset="0.664" stop-color="#ff0053"/><stop offset="0.783" stop-color="#f03"/><stop offset="1" stop-color="#ff0012"/></linearGradient>
<linearGradient id="g123" gradientUnits="userSpaceOnUse" x1="99.9" x2="506.7" y1="0" y2="0"><stop offset="0" stop-color="#0098ff"/><stop offset="0.229" stop-color="#017eff"/><stop offset="0.429" stop-color="#ff58fd"/><stop offset="0.466" stop-color="#ff40cf"/><stop offset="0.51" stop-color="#ff2ba7"/><stop offset="0.626" stop-color="#ff0866"/><stop offset="0.788" stop-color="#ff0036"/><stop offset="1" stop-color="#ff0015"/></linearGradient>
<linearGradient id="g124" gradientUnits="userSpaceOnUse" x1="100.8" x2="499.5" y1="0" y2="0"><stop offset="0" stop-color="#0094ff"/><stop offset="0.229" stop-color="#0079ff"/><stop offset="0.354" stop-color="#9564ff"/><stop offset="0.435" stop-color="#ff52fe"/><stop offset="0.472" stop-color="#ff3cd0"/><stop offset="0.518" stop-color="#ff27a8"/><stop offset="0.631" stop-color="#ff066a"/><stop offset="0.791" stop-color="#ff003a"/><stop offset="1" stop-color="#ff0018"/></linearGradient>
<linearGradient id="g125" gradientUnits="userSpaceOnUse" x1="101.7" x2="492.4" y1="0" y2="0"><stop offset="0" stop-color="#008fff"/><stop offset="0.228" stop-color="#0075ff"/><stop offset="0.359" stop-color="#965fff"/><stop offset="0.441" stop-color="#ff4dff"/><stop offset="0.523" stop-color="#ff24ac"/><stop offset="0.638" stop-color="#ff036c"/><stop offset="0.797" stop-color="#ff003d"/><stop offset="1" stop-color="#ff001c"/></linearGradient>
<linearGradient id="g126" gradientUnits="userSpaceOnUse" x1="102.6" x2="485.3" y1="0" y2="0"><stop offset="0" stop-color="#008bff"/><stop offset="0.228" stop-color="#0070ff"/><stop offset="0.45" stop-color="#ff45fd"/><stop offset="0.534" stop-color="#ff1fab"/><stop offset="0.647" stop-color="#ff006e"/><stop offset="0.804" stop-color="#ff003f"/><stop offset="1" stop-color="#ff001f"/></linearGradient>
<linearGradient id="g127" gradientUnits="userSpaceOnUse" x1="103.5" x2="478.2" y1="0" y2="0"><stop offset="0" stop-color="#0086ff"/><stop offset="0.227" stop-color="#006cff"/><stop offset="0.361" stop-color="#8e55ff"/><stop offset="0.457" stop-color="#ff40fd"/><stop offset="0.54" stop-color="#ff1cae"/><stop offset="0.652" stop-color="#ff0072"/><stop offset="0.807" stop-color="#ff0043"/><stop offset="1" stop-color="#ff0023"/></linearGradient>
<linearGradient id="g128" gradientUnits="userSpaceOnUse" x1="104.4" x2="471.0" y1="0" y2="0"><stop offset="0" stop-color="#0082ff"/><stop offset="0.23" stop-color="#0167ff"/><stop offset="0.372" stop-color="#944fff"/><stop offset="0.464" stop-color="#ff3afe"/><stop offset="0.546" stop-color="#ff19b1"/><stop offset="0.658" stop-color="#ff0075"/><stop offset="0.811" stop-color="#ff0047"/><stop offset="1" stop-color="#ff0027"/></linearGradient>
<linearGradient id="g129" gradientUnits="userSpaceOnUse" x1="105.3" x2="463.9" y1="0" y2="0"><stop offset="0" stop-color="#007eff"/><stop offset="0.229" stop-color="#0163ff"/><stop offset="0.38" stop-color="#9749ff"/><stop offset="0.472" stop-color="#ff35ff"/><stop offset="0.556" stop-color="#ff14b3"/><stop offset="0.631" stop-color="#ff0087"/><stop offset="0.668" stop-color="#ff0078"/><stop offset="0.818" stop-color="#ff004a"/><stop offset="1" stop-color="#ff002a"/></linearGradient>
<linearGradient id="g130" gradientUnits="userSpaceOnUse" x1="106.3" x2="456.8" y1="0" y2="0"><stop offset="0" stop-color="#007aff"/><stop offset="0.229" stop-color="#005fff"/><stop offset="0.483" stop-color="#ff2efd"/><stop offset="0.566" stop-color="#ff10b4"/><stop offset="0.626" stop-color="#ff0091"/><stop offset="0.677" stop-color="#ff007a"/><stop offset="0.826" stop-color="#ff004d"/><stop offset="1" stop-color="#ff002e"/></linearGradient>
<linearGradient id="g131" gradientUnits="userSpaceOnUse" x1="107.3" x2="449.7" y1="0" y2="0"><stop offset="0" stop-color="#0075ff"/><stop offset="0.228" stop-color="#005bff"/><stop offset="0.491" stop-color="#ff29fd"/><stop offset="0.576" stop-color="#ff0cb5"/><stop offset="0.62" stop-color="#ff009b"/><stop offset="0.684" stop-color="#ff007e"/><stop offset="0.83" stop-color="#ff0051"/><stop offset="1" stop-color="#f03"/></linearGradient>
<linearGradient id="g132" gradientUnits="userSpaceOnUse" x1="108.3" x2="442.5" y1="0" y2="0"><stop offset="0" stop-color="#0071ff"/><stop offset="0.228" stop-color="#0057ff"/><stop offset="0.389" stop-color="#913cff"/><stop offset="0.5" stop-color="#ff23fe"/><stop offset="0.584" stop-color="#ff08b8"/><stop offset="0.692" stop-color="#ff0081"/><stop offset="0.835" stop-color="#f05"/><stop offset="1" stop-color="#ff0037"/></linearGradient>
<linearGradient id="g133" gradientUnits="userSpaceOnUse" x1="109.3" x2="435.4" y1="0" y2="0"><stop offset="0" stop-color="#006dff"/><stop offset="0.227" stop-color="#0053ff"/><stop offset="0.399" stop-color="#9436ff"/><stop offset="0.509" stop-color="#ff1eff"/><stop offset="0.592" stop-color="#ff05bb"/><stop offset="0.699" stop-color="#ff0085"/><stop offset="0.844" stop-color="#ff0058"/><stop offset="1" stop-color="#ff003c"/></linearGradient>
<linearGradient id="g134" gradientUnits="userSpaceOnUse" x1="110.4" x2="428.3" y1="0" y2="0"><stop offset="0" stop-color="#0069ff"/><stop offset="0.227" stop-color="#004fff"/><stop offset="0.521" stop-color="#ff18fe"/><stop offset="0.603" stop-color="#ff00bd"/><stop offset="0.71" stop-color="#ff0087"/><stop offset="0.849" stop-color="#ff005c"/><stop offset="1" stop-color="#ff0040"/></linearGradient>
<linearGradient id="g135" gradientUnits="userSpaceOnUse" x1="111.5" x2="421.2" y1="0" y2="0"><stop offset="0" stop-color="#0065ff"/><stop offset="0.227" stop-color="#004bff"/><stop offset="0.411" stop-color="#942dff"/><stop offset="0.531" stop-color="#ff13fe"/><stop offset="0.615" stop-color="#ff00be"/><stop offset="0.718" stop-color="#ff008b"/><stop offset="0.858" stop-color="#ff0060"/><stop offset="1" stop-color="#ff0045"/></linearGradient>
<linearGradient id="g136" gradientUnits="userSpaceOnUse" x1="112.6" x2="414.0" y1="0" y2="0"><stop offset="0" stop-color="#0061ff"/><stop offset="0.226" stop-color="#0047ff"/><stop offset="0.419" stop-color="#9528ff"/><stop offset="0.542" stop-color="#ff0eff"/><stop offset="0.621" stop-color="#ff00c3"/><stop offset="0.724" stop-color="#ff0090"/><stop offset="0.86" stop-color="#ff0065"/><stop offset="1" stop-color="#ff004a"/></linearGradient>
<linearGradient id="g137" gradientUnits="userSpaceOnUse" x1="113.7" x2="406.9" y1="0" y2="0"><stop offset="0" stop-color="#005dff"/><stop offset="0.225" stop-color="#0043ff"/><stop offset="0.427" stop-color="#9524ff"/><stop offset="0.553" stop-color="#ff08ff"/><stop offset="0.635" stop-color="#ff00c4"/><stop offset="0.734" stop-color="#ff0094"/><stop offset="0.867" stop-color="#ff006a"/><stop offset="1" stop-color="#ff0050"/></linearGradient>
<linearGradient id="g138" gradientUnits="userSpaceOnUse" x1="114.8" x2="399.8" y1="0" y2="0"><stop offset="0" stop-color="#0058ff"/><stop offset="0.225" stop-color="#0040ff"/><stop offset="0.433" stop-color="#951fff"/><stop offset="0.567" stop-color="#ff02fe"/><stop offset="0.648" stop-color="#ff00c5"/><stop offset="0.746" stop-color="#ff0097"/><stop offset="0.877" stop-color="#ff006d"/><stop offset="1" stop-color="#ff0056"/></linearGradient>
<linearGradient id="g139" gradientUnits="userSpaceOnUse" x1="115.9" x2="392.6" y1="0" y2="0"><stop offset="0" stop-color="#0054ff"/><stop offset="0.225" stop-color="#003cff"/><stop offset="0.442" stop-color="#951bff"/><stop offset="0.58" stop-color="#f0f"/><stop offset="0.659" stop-color="#ff00c8"/><stop offset="0.757" stop-color="#ff009a"/><stop offset="0.884" stop-color="#ff0072"/><stop offset="1" stop-color="#ff005c"/></linearGradient>
<linearGradient id="g140" gradientUnits="userSpaceOnUse" x1="117.1" x2="385.5" y1="0" y2="0"><stop offset="0" stop-color="#0050ff"/><stop offset="0.224" stop-color="#0038ff"/><stop offset="0.451" stop-color="#9616ff"/><stop offset="0.593" stop-color="#f0f"/><stop offset="0.672" stop-color="#ff00cb"/><stop offset="0.769" stop-color="#ff009e"/><stop offset="0.896" stop-color="#ff0076"/><stop offset="1" stop-color="#ff0062"/></linearGradient>
<linearGradient id="g141" gradientUnits="userSpaceOnUse" x1="118.3" x2="378.4" y1="0" y2="0"><stop offset="0" stop-color="#004cff"/><stop offset="0.223" stop-color="#0035ff"/><stop offset="0.542" stop-color="#ce00ff"/><stop offset="0.608" stop-color="#f0f"/><stop offset="0.688" stop-color="#f0c"/><stop offset="0.781" stop-color="#ff00a2"/><stop offset="0.904" stop-color="#ff007b"/><stop offset="1" stop-color="#ff0069"/></linearGradient>
<linearGradient id="g142" gradientUnits="userSpaceOnUse" x1="119.5" x2="371.3" y1="0" y2="0"><stop offset="0" stop-color="#0049ff"/><stop offset="0.223" stop-color="#0131ff"/><stop offset="0.534" stop-color="#c000ff"/><stop offset="0.625" stop-color="#ff00fe"/><stop offset="0.701" stop-color="#ff00cf"/><stop offset="0.793" stop-color="#ff00a6"/><stop offset="1" stop-color="#ff0070"/></linearGradient>
<linearGradient id="g143" gradientUnits="userSpaceOnUse" x1="120.7" x2="364.1" y1="0" y2="0"><stop offset="0" stop-color="#0045ff"/><stop offset="0.222" stop-color="#012eff"/><stop offset="0.523" stop-color="#b100ff"/><stop offset="0.642" stop-color="#f0f"/><stop offset="0.802" stop-color="#ff00ac"/><stop offset="1" stop-color="#f07"/></linearGradient>
<linearGradient id="g144" gradientUnits="userSpaceOnUse" x1="121.9" x2="357.0" y1="0" y2="0"><stop offset="0" stop-color="#0041ff"/><stop offset="0.221" stop-color="#012bff"/><stop offset="0.511" stop-color="#a200ff"/><stop offset="0.66" stop-color="#f0f"/><stop offset="0.817" stop-color="#ff00b0"/><stop offset="1" stop-color="#ff007f"/></linearGradient>
<linearGradient id="g145" gradientUnits="userSpaceOnUse" x1="123.1" x2="349.9" y1="0" y2="0"><stop offset="0" stop-color="#003dff"/><stop offset="0.217" stop-color="#0028ff"/><stop offset="0.496" stop-color="#9300ff"/><stop offset="0.681" stop-color="#ff00fe"/><stop offset="0.832" stop-color="#ff00b5"/><stop offset="1" stop-color="#f08"/></linearGradient>
<linearGradient id="g146" gradientUnits="userSpaceOnUse" x1="124.4" x2="342.8" y1="0" y2="0"><stop offset="0" stop-color="#0039ff"/><stop offset="0.216" stop-color="#0024ff"/><stop offset="0.482" stop-color="#8500ff"/><stop offset="0.697" stop-color="#fd00ff"/><stop offset="0.853" stop-color="#ff00b7"/><stop offset="1" stop-color="#ff0091"/></linearGradient>
<linearGradient id="g147" gradientUnits="userSpaceOnUse" x1="125.7" x2="335.6" y1="0" y2="0"><stop offset="0" stop-color="#0035ff"/><stop offset="0.215" stop-color="#0021ff"/><stop offset="0.469" stop-color="#7900ff"/><stop offset="0.722" stop-color="#f0f"/><stop offset="0.866" stop-color="#ff00bd"/><stop offset="1" stop-color="#ff009a"/></linearGradient>
<linearGradient id="g148" gradientUnits="userSpaceOnUse" x1="127.0" x2="328.5" y1="0" y2="0"><stop offset="0" stop-color="#0031ff"/><stop offset="0.214" stop-color="#011eff"/><stop offset="0.453" stop-color="#6d00ff"/><stop offset="0.746" stop-color="#fe00ff"/><stop offset="0.886" stop-color="#ff00c2"/><stop offset="1" stop-color="#ff00a5"/></linearGradient>
<linearGradient id="g149" gradientUnits="userSpaceOnUse" x1="128.3" x2="321.4" y1="0" y2="0"><stop offset="0" stop-color="#002dff"/><stop offset="0.212" stop-color="#011bff"/><stop offset="0.435" stop-color="#6000ff"/><stop offset="0.772" stop-color="#fe00ff"/><stop offset="0.912" stop-color="#ff00c4"/><stop offset="1" stop-color="#ff00b0"/></linearGradient>
<linearGradient id="g150" gradientUnits="userSpaceOnUse" x1="129.7" x2="314.3" y1="0" y2="0"><stop offset="0" stop-color="#0029ff"/><stop offset="0.207" stop-color="#0018ff"/><stop offset="0.413" stop-color="#5400ff"/><stop offset="0.799" stop-color="#fd00ff"/><stop offset="0.94" stop-color="#ff00c7"/><stop offset="1" stop-color="#ff00bc"/></linearGradient>
<linearGradient id="g151" gradientUnits="userSpaceOnUse" x1="131.0" x2="307.1" y1="0" y2="0"><stop offset="0" stop-color="#0025ff"/><stop offset="0.205" stop-color="#0015ff"/><stop offset="0.392" stop-color="#4800ff"/><stop offset="0.835" stop-color="#f0f"/><stop offset="0.966" stop-color="#f0c"/><stop offset="1" stop-color="#ff00c9"/></linearGradient>
<linearGradient id="g152" gradientUnits="userSpaceOnUse" x1="132.5" x2="300.0" y1="0" y2="0"><stop offset="0" stop-color="#0021ff"/><stop offset="0.204" stop-color="#0111ff"/><stop offset="0.365" stop-color="#3c00ff"/><stop offset="0.868" stop-color="#fe00ff"/><stop offset="0.97" stop-color="#ff00d8"/><stop offset="1" stop-color="#ff00d8"/></linearGradient>
<linearGradient id="g153" gradientUnits="userSpaceOnUse" x1="134.0" x2="292.9" y1="0" y2="0"><stop offset="0" stop-color="#001dff"/><stop offset="0.196" stop-color="#000eff"/><stop offset="0.342" stop-color="#3200ff"/><stop offset="0.905" stop-color="#fe00ff"/><stop offset="0.968" stop-color="#ff00e8"/><stop offset="1" stop-color="#ff00e7"/></linearGradient>
<linearGradient id="g154" gradientUnits="userSpaceOnUse" x1="135.5" x2="285.8" y1="0" y2="0"><stop offset="0" stop-color="#0019ff"/><stop offset="0.193" stop-color="#010bff"/><stop offset="0.307" stop-color="#2600ff"/><stop offset="0.667" stop-color="#9800ff"/><stop offset="0.947" stop-color="#fd00ff"/><stop offset="1" stop-color="#ff00f8"/></linearGradient>
<linearGradient id="g155" gradientUnits="userSpaceOnUse" x1="137.1" x2="278.6" y1="0" y2="0"><stop offset="0" stop-color="#0015ff"/><stop offset="0.184" stop-color="#0008ff"/><stop offset="0.277" stop-color="#1c00ff"/><stop offset="0.965" stop-color="#f200ff"/><stop offset="1" stop-color="#f300ff"/></linearGradient>
<linearGradient id="g156" gradientUnits="userSpaceOnUse" x1="138.7" x2="271.5" y1="0" y2="0"><stop offset="0" stop-color="#01f"/><stop offset="0.182" stop-color="#0105ff"/><stop offset="0.962" stop-color="#e000ff"/><stop offset="1" stop-color="#e100ff"/></linearGradient>
<linearGradient id="g157" gradientUnits="userSpaceOnUse" x1="140.5" x2="264.4" y1="0" y2="0"><stop offset="0" stop-color="#000dff"/><stop offset="0.171" stop-color="#0002ff"/><stop offset="0.959" stop-color="#cf00ff"/><stop offset="1" stop-color="#d000ff"/></linearGradient>
<linearGradient id="g158" gradientUnits="userSpaceOnUse" x1="142.3" x2="257.3" y1="0" y2="0"><stop offset="0" stop-color="#0008ff"/><stop offset="0.165" stop-color="#0200ff"/><stop offset="0.957" stop-color="#bf00ff"/><stop offset="1" stop-color="#c000ff"/></linearGradient>
<linearGradient id="g159" gradientUnits="userSpaceOnUse" x1="144.2" x2="250.1" y1="0" y2="0"><stop offset="0" stop-color="#0004ff"/><stop offset="0.152" stop-color="#0100ff"/><stop offset="0.952" stop-color="#af00ff"/><stop offset="1" stop-color="#b000ff"/></linearGradient>
<linearGradient id="g160" gradientUnits="userSpaceOnUse" x1="146.1" x2="243.0" y1="0" y2="0"><stop offset="0" stop-color="#00f"/><stop offset="0.135" stop-color="#0100ff"/><stop offset="0.948" stop-color="#a000ff"/><stop offset="1" stop-color="#a100ff"/></linearGradient>
<linearGradient id="g161" gradientUnits="userSpaceOnUse" x1="148.3" x2="235.9" y1="0" y2="0"><stop offset="0" stop-color="#00f"/><stop offset="0.115" stop-color="#0100ff"/><stop offset="0.943" stop-color="#9200ff"/><stop offset="1" stop-color="#9300ff"/></linearGradient>
<linearGradient id="g162" gradientUnits="userSpaceOnUse" x1="150.6" x2="228.8" y1="0" y2="0"><stop offset="0" stop-color="#00f"/><stop offset="0.09" stop-color="#0200ff"/><stop offset="0.936" stop-color="#8400ff"/><stop offset="1" stop-color="#8500ff"/></linearGradient>
<linearGradient id="g163" gradientUnits="userSpaceOnUse" x1="153.2" x2="221.6" y1="0" y2="0"><stop offset="0" stop-color="#00f"/><stop offset="0.926" stop-color="#7600ff"/><stop offset="1" stop-color="#70f"/></linearGradient>
<linearGradient id="g164" gradientUnits="userSpaceOnUse" x1="156.1" x2="214.5" y1="0" y2="0"><stop offset="0" stop-color="#0800ff"/><stop offset="0.914" stop-color="#6900ff"/><stop offset="1" stop-color="#6a00ff"/></linearGradient>
<linearGradient id="g165" gradientUnits="userSpaceOnUse" x1="159.3" x2="207.4" y1="0" y2="0"><stop offset="0" stop-color="#10f"/><stop offset="0.896" stop-color="#5c00ff"/><stop offset="1" stop-color="#5d00ff"/></linearGradient>
<linearGradient id="g166" gradientUnits="userSpaceOnUse" x1="162.9" x2="200.3" y1="0" y2="0"><stop offset="0" stop-color="#1a00ff"/><stop offset="0.865" stop-color="#5000ff"/><stop offset="1" stop-color="#5100ff"/></linearGradient>
<linearGradient id="g167" gradientUnits="userSpaceOnUse" x1="166.7" x2="193.1" y1="0" y2="0"><stop offset="0" stop-color="#20f"/><stop offset="1" stop-color="#4500ff"/></linearGradient>
<linearGradient id="g168" gradientUnits="userSpaceOnUse" x1="170.4" x2="186.0" y1="0" y2="0"><stop offset="0" stop-color="#2a00ff"/><stop offset="1" stop-color="#3900ff"/></linearGradient>
<linearGradient id="g169" gradientUnits="userSpaceOnUse" x1="174.4" x2="178.9" y1="0" y2="0"><stop offset="0" stop-color="#2f00ff"/><stop offset="1" stop-color="#3200ff"/></linearGradient><linearGradient id="h0" gradientUnits="userSpaceOnUse" x1="395.5" x2="503.4" y1="0" y2="0"><stop offset="0" stop-color="#aeff00"/><stop offset="1" stop-color="#d8ff00"/></linearGradient>
<linearGradient id="h1" gradientUnits="userSpaceOnUse" x1="395.5" x2="507.9" y1="0" y2="0"><stop offset="0" stop-color="#afff00"/><stop offset="1" stop-color="#dbff00"/></linearGradient>
<linearGradient id="h2" gradientUnits="userSpaceOnUse" x1="395.5" x2="512.3" y1="0" y2="0"><stop offset="0" stop-color="#b0ff00"/><stop offset="1" stop-color="#deff00"/></linearGradient>
<linearGradient id="h3" gradientUnits="userSpaceOnUse" x1="395.5" x2="516.7" y1="0" y2="0"><stop offset="0" stop-color="#b0ff00"/><stop offset="1" stop-color="#e1ff00"/></linearGradient>
<linearGradient id="h4" gradientUnits="userSpaceOnUse" x1="395.5" x2="521.2" y1="0" y2="0"><stop offset="0" stop-color="#b1ff00"/><stop offset="1" stop-color="#e4ff00"/></linearGradient>
<linearGradient id="h5" gradientUnits="userSpaceOnUse" x1="395.5" x2="525.6" y1="0" y2="0"><stop offset="0" stop-color="#b2ff00"/><stop offset="1" stop-color="#e6ff00"/></linearGradient>
<linearGradient id="h6" gradientUnits="userSpaceOnUse" x1="395.5" x2="530.1" y1="0" y2="0"><stop offset="0" stop-color="#b3ff00"/><stop offset="1" stop-color="#e9ff00"/></linearGradient>
<linearGradient id="h7" gradientUnits="userSpaceOnUse" x1="395.5" x2="534.5" y1="0" y2="0"><stop offset="0" stop-color="#b4ff00"/><stop offset="1" stop-color="#edff00"/></linearGradient>
<linearGradient id="h8" gradientUnits="userSpaceOnUse" x1="395.5" x2="539.0" y1="0" y2="0"><stop offset="0" stop-color="#b5ff00"/><stop offset="1" stop-color="#f0ff00"/></linearGradient>
<linearGradient id="h9" gradientUnits="userSpaceOnUse" x1="395.5" x2="543.4" y1="0" y2="0"><stop offset="0" stop-color="#b6ff00"/><stop offset="1" stop-color="#f3ff00"/></linearGradient>
<linearGradient id="h10" gradientUnits="userSpaceOnUse" x1="395.5" x2="547.8" y1="0" y2="0"><stop offset="0" stop-color="#b7ff00"/><stop offset="1" stop-color="#f6ff00"/></linearGradient>
<linearGradient id="h11" gradientUnits="userSpaceOnUse" x1="395.5" x2="552.3" y1="0" y2="0"><stop offset="0" stop-color="#b8ff00"/><stop offset="1" stop-color="#f9ff00"/></linearGradient>
<linearGradient id="h12" gradientUnits="userSpaceOnUse" x1="395.5" x2="556.7" y1="0" y2="0"><stop offset="0" stop-color="#b9ff00"/><stop offset="1" stop-color="#fcff00"/></linearGradient>
<linearGradient id="h13" gradientUnits="userSpaceOnUse" x1="395.5" x2="561.1" y1="0" y2="0"><stop offset="0" stop-color="#baff00"/><stop offset="1" stop-color="#ff0"/></linearGradient>
<linearGradient id="h14" gradientUnits="userSpaceOnUse" x1="395.5" x2="565.6" y1="0" y2="0"><stop offset="0" stop-color="#bf0"/><stop offset="1" stop-color="#fffc00"/></linearGradient>
<linearGradient id="h15" gradientUnits="userSpaceOnUse" x1="395.5" x2="570.0" y1="0" y2="0"><stop offset="0" stop-color="#bcff00"/><stop offset="0.891" stop-color="#ff0"/><stop offset="1" stop-color="#fff800"/></linearGradient>
<linearGradient id="h16" gradientUnits="userSpaceOnUse" x1="395.5" x2="574.4" y1="0" y2="0"><stop offset="0" stop-color="#bcff00"/><stop offset="0.854" stop-color="#ff0"/><stop offset="1" stop-color="#fff500"/></linearGradient>
<linearGradient id="h17" gradientUnits="userSpaceOnUse" x1="395.5" x2="578.9" y1="0" y2="0"><stop offset="0" stop-color="#bdff00"/><stop offset="0.82" stop-color="#ff0"/><stop offset="1" stop-color="#fff200"/></linearGradient>
<linearGradient id="h18" gradientUnits="userSpaceOnUse" x1="395.5" x2="583.3" y1="0" y2="0"><stop offset="0" stop-color="#beff00"/><stop offset="0.786" stop-color="#ff0"/><stop offset="1" stop-color="#ffef00"/></linearGradient>
<linearGradient id="h19" gradientUnits="userSpaceOnUse" x1="395.5" x2="587.7" y1="0" y2="0"><stop offset="0" stop-color="#bfff00"/><stop offset="0.755" stop-color="#ff0"/><stop offset="1" stop-color="#ffec00"/></linearGradient>
<linearGradient id="h20" gradientUnits="userSpaceOnUse" x1="395.5" x2="592.2" y1="0" y2="0"><stop offset="0" stop-color="#c0ff00"/><stop offset="0.724" stop-color="#ff0"/><stop offset="1" stop-color="#ffea00"/></linearGradient>
<linearGradient id="h21" gradientUnits="userSpaceOnUse" x1="395.5" x2="596.6" y1="0" y2="0"><stop offset="0" stop-color="#c1ff00"/><stop offset="0.697" stop-color="#ff0"/><stop offset="1" stop-color="#ffe700"/></linearGradient>
<linearGradient id="h22" gradientUnits="userSpaceOnUse" x1="395.5" x2="601.0" y1="0" y2="0"><stop offset="0" stop-color="#c2ff00"/><stop offset="0.668" stop-color="#ff0"/><stop offset="1" stop-color="#ffe400"/></linearGradient>
<linearGradient id="h23" gradientUnits="userSpaceOnUse" x1="395.5" x2="605.4" y1="0" y2="0"><stop offset="0" stop-color="#c3ff00"/><stop offset="0.641" stop-color="#ff0"/><stop offset="1" stop-color="#ffe100"/></linearGradient>
<linearGradient id="h24" gradientUnits="userSpaceOnUse" x1="395.5" x2="609.9" y1="0" y2="0"><stop offset="0" stop-color="#c4ff00"/><stop offset="0.617" stop-color="#ff0"/><stop offset="1" stop-color="#ffde00"/></linearGradient>
<linearGradient id="h25" gradientUnits="userSpaceOnUse" x1="395.5" x2="614.3" y1="0" y2="0"><stop offset="0" stop-color="#c5ff00"/><stop offset="0.592" stop-color="#ff0"/><stop offset="1" stop-color="#ffdc00"/></linearGradient>
<linearGradient id="h26" gradientUnits="userSpaceOnUse" x1="395.5" x2="618.5" y1="0" y2="0"><stop offset="0" stop-color="#c6ff00"/><stop offset="0.57" stop-color="#ff0"/><stop offset="1" stop-color="#ffd900"/></linearGradient>
<linearGradient id="h27" gradientUnits="userSpaceOnUse" x1="395.5" x2="618.5" y1="0" y2="0"><stop offset="0" stop-color="#c7ff00"/><stop offset="0.556" stop-color="#ff0"/><stop offset="1" stop-color="#ffd700"/></linearGradient>
<linearGradient id="h28" gradientUnits="userSpaceOnUse" x1="395.5" x2="618.5" y1="0" y2="0"><stop offset="0" stop-color="#c8ff00"/><stop offset="0.543" stop-color="#ff0"/><stop offset="1" stop-color="#ffd600"/></linearGradient>
<linearGradient id="h29" gradientUnits="userSpaceOnUse" x1="395.5" x2="618.5" y1="0" y2="0"><stop offset="0" stop-color="#c9ff00"/><stop offset="0.534" stop-color="#ff0"/><stop offset="1" stop-color="#ffd500"/></linearGradient>
<linearGradient id="h30" gradientUnits="userSpaceOnUse" x1="395.5" x2="618.5" y1="0" y2="0"><stop offset="0" stop-color="#caff00"/><stop offset="0.52" stop-color="#ff0"/><stop offset="1" stop-color="#ffd400"/></linearGradient>
<linearGradient id="h31" gradientUnits="userSpaceOnUse" x1="395.5" x2="618.5" y1="0" y2="0"><stop offset="0" stop-color="#cf0"/><stop offset="0.507" stop-color="#ff0"/><stop offset="1" stop-color="#ffd300"/></linearGradient>
<linearGradient id="h32" gradientUnits="userSpaceOnUse" x1="395.5" x2="618.5" y1="0" y2="0"><stop offset="0" stop-color="#cdff00"/><stop offset="0.498" stop-color="#ff0"/><stop offset="1" stop-color="#ffd200"/></linearGradient>
<linearGradient id="h33" gradientUnits="userSpaceOnUse" x1="395.5" x2="618.5" y1="0" y2="0"><stop offset="0" stop-color="#ceff00"/><stop offset="0.484" stop-color="#ff0"/><stop offset="1" stop-color="#ffd100"/></linearGradient>
<linearGradient id="h34" gradientUnits="userSpaceOnUse" x1="395.5" x2="618.5" y1="0" y2="0"><stop offset="0" stop-color="#cfff00"/><stop offset="0.475" stop-color="#ff0"/><stop offset="1" stop-color="#ffd000"/></linearGradient>
<linearGradient id="h35" gradientUnits="userSpaceOnUse" x1="395.5" x2="618.5" y1="0" y2="0"><stop offset="0" stop-color="#d0ff00"/><stop offset="0.462" stop-color="#ff0"/><stop offset="1" stop-color="#ffcf00"/></linearGradient>
<linearGradient id="h36" gradientUnits="userSpaceOnUse" x1="395.5" x2="618.5" y1="0" y2="0"><stop offset="0" stop-color="#d1ff00"/><stop offset="0.448" stop-color="#ff0"/><stop offset="1" stop-color="#ffce00"/></linearGradient>
<linearGradient id="h37" gradientUnits="userSpaceOnUse" x1="395.5" x2="618.5" y1="0" y2="0"><stop offset="0" stop-color="#d2ff00"/><stop offset="0.439" stop-color="#ff0"/><stop offset="1" stop-color="#ffcd00"/></linearGradient>
<linearGradient id="h38" gradientUnits="userSpaceOnUse" x1="395.5" x2="618.5" y1="0" y2="0"><stop offset="0" stop-color="#d3ff00"/><stop offset="0.426" stop-color="#ff0"/><stop offset="1" stop-color="#fc0"/></linearGradient>
<linearGradient id="h39" gradientUnits="userSpaceOnUse" x1="395.5" x2="618.5" y1="0" y2="0"><stop offset="0" stop-color="#d4ff00"/><stop offset="0.413" stop-color="#ff0"/><stop offset="1" stop-color="#ffcb00"/></linearGradient>
<linearGradient id="h40" gradientUnits="userSpaceOnUse" x1="395.5" x2="618.5" y1="0" y2="0"><stop offset="0" stop-color="#d5ff00"/><stop offset="0.404" stop-color="#ff0"/><stop offset="1" stop-color="#ffca00"/></linearGradient>
<linearGradient id="h41" gradientUnits="userSpaceOnUse" x1="395.5" x2="618.5" y1="0" y2="0"><stop offset="0" stop-color="#d6ff00"/><stop offset="0.39" stop-color="#ff0"/><stop offset="1" stop-color="#ffc900"/></linearGradient>
<linearGradient id="h42" gradientUnits="userSpaceOnUse" x1="395.5" x2="618.5" y1="0" y2="0"><stop offset="0" stop-color="#d7ff00"/><stop offset="0.377" stop-color="#ff0"/><stop offset="1" stop-color="#ffc800"/></linearGradient>
<linearGradient id="h43" gradientUnits="userSpaceOnUse" x1="395.5" x2="618.5" y1="0" y2="0"><stop offset="0" stop-color="#d9ff00"/><stop offset="0.368" stop-color="#ff0"/><stop offset="1" stop-color="#ffc700"/></linearGradient>
<linearGradient id="h44" gradientUnits="userSpaceOnUse" x1="395.5" x2="618.5" y1="0" y2="0"><stop offset="0" stop-color="#daff00"/><stop offset="0.354" stop-color="#ff0"/><stop offset="1" stop-color="#ffc600"/></linearGradient>
<linearGradient id="h45" gradientUnits="userSpaceOnUse" x1="395.5" x2="618.5" y1="0" y2="0"><stop offset="0" stop-color="#dbff00"/><stop offset="0.341" stop-color="#ff0"/><stop offset="1" stop-color="#ffc500"/></linearGradient>
<linearGradient id="h46" gradientUnits="userSpaceOnUse" x1="395.5" x2="618.5" y1="0" y2="0"><stop offset="0" stop-color="#dcff00"/><stop offset="0.332" stop-color="#ff0"/><stop offset="1" stop-color="#ffc400"/></linearGradient>
<linearGradient id="h47" gradientUnits="userSpaceOnUse" x1="395.5" x2="618.5" y1="0" y2="0"><stop offset="0" stop-color="#df0"/><stop offset="0.318" stop-color="#ff0"/><stop offset="1" stop-color="#ffc300"/></linearGradient>
<linearGradient id="h48" gradientUnits="userSpaceOnUse" x1="395.5" x2="618.5" y1="0" y2="0"><stop offset="0" stop-color="#deff01"/><stop offset="0.305" stop-color="#ff0"/><stop offset="1" stop-color="#ffc200"/></linearGradient>
<linearGradient id="h49" gradientUnits="userSpaceOnUse" x1="395.5" x2="618.5" y1="0" y2="0"><stop offset="0" stop-color="#e0ff02"/><stop offset="0.296" stop-color="#ff0"/><stop offset="1" stop-color="#ffc100"/></linearGradient>
<linearGradient id="h50" gradientUnits="userSpaceOnUse" x1="395.5" x2="618.5" y1="0" y2="0"><stop offset="0" stop-color="#e1ff03"/><stop offset="0.287" stop-color="#ff0"/><stop offset="1" stop-color="#ffc000"/></linearGradient>
<clipPath id="lc"><path d="M174.7 717.6L173.7 716.7L172.3 715.6L171.5 714.9L170.6 714.2L169.6 713.4L168.4 712.4L167.1 711.4L165.7 710.3L164.1 709.0L162.4 707.6L160.6 706.0L158.6 704.1L156.5 702.0L154.2 699.4L151.6 696.2L148.6 692.1L145.3 687.0L141.6 680.9L137.7 673.6L133.3 664.7L128.5 654.0L123.2 641.4L117.4 626.7L111.2 609.5L104.9 589.8L98.6 567.5L92.4 542.6L86.2 515.2L80.4 486.0L75.1 455.7L70.8 424.9L67.4 394.4L65.2 364.7L64.3 336.8L65.0 310.6L67.3 286.6L71.2 265.4L76.8 247.5L83.9 233.3L92.3 223.3L101.7 217.2L111.8 214.5L122.3 214.8L133.1 217.3L144.1 221.2L155.1 226.1L165.8 231.5L176.2 237.2L186.4 243.2L196.4 249.5L206.3 256.0L216.1 262.9L225.9 270.0L235.6 277.4L245.2 285.0L254.9 292.7L264.5 300.7L274.1 308.7L283.7 316.9L293.3 325.2L302.9 333.5L312.5 342.0L322.1 350.4L331.7 358.9L341.2 367.4L350.7 375.9L360.2 384.4L369.6 392.9L378.9 401.3L388.1 409.6L397.2 417.8L406.1 425.9L414.9 433.9L423.6 441.7L432.0 449.3L440.2 456.7L448.2 463.9L456.0 470.9L463.3 477.6L470.3 483.9L476.9 489.8L483.1 495.4L489.0 500.8L494.7 505.8L499.9 510.5L504.7 514.8L509.1 518.8L513.2 522.5L516.9 525.9L520.4 529.0L523.5 531.9L526.4 534.5L529.0 536.8L531.4 539.0L533.6 540.9L535.6 542.7L537.4 544.4L539.1 546.0L540.8 547.4L542.2 548.8L543.6 550.0L544.9 551.1L546.0 552.2L547.1 553.1L548.0 554.0L548.8 554.7L549.5 555.4L550.2 556.0L551.3 557.0L552.2 557.8L552.6 558.1Z"/></clipPath>
<clipPath id="ic"><rect x="395.500" y="218" width="223" height="152"/></clipPath>
<clipPath id="ilc"><path d="M-550.2 1768.7L-551.3 1768.8L-552.7 1768.9L-553.6 1769.2L-555.0 1769.2L-556.5 1769.1L-558.0 1769.1L-559.3 1768.9L-560.5 1768.6L-562.0 1768.0L-562.9 1767.7L-563.8 1767.3L-564.7 1766.9L-565.7 1766.4L-566.7 1765.9L-567.8 1765.3L-568.9 1764.7L-570.1 1764.1L-571.5 1763.3L-572.9 1762.6L-574.4 1761.7L-576.0 1760.8L-577.7 1759.8L-579.5 1758.8L-581.3 1757.6L-583.2 1756.4L-585.2 1755.1L-587.3 1753.8L-589.6 1752.4L-591.9 1750.9L-594.4 1749.4L-597.1 1747.8L-599.9 1746.1L-603.0 1744.3L-606.2 1742.4L-609.6 1740.3L-613.2 1738.1L-617.0 1735.9L-621.1 1733.5L-625.3 1731.0L-629.6 1728.4L-634.2 1725.6L-639.0 1722.7L-644.0 1719.6L-649.2 1716.2L-654.7 1712.6L-660.4 1708.8L-666.4 1704.7L-672.5 1700.3L-678.8 1695.6L-685.3 1690.6L-692.1 1685.1L-699.2 1679.0L-706.8 1672.2L-714.8 1664.4L-723.5 1655.6L-732.8 1645.7L-742.6 1634.7L-752.9 1622.6L-763.7 1609.4L-774.9 1594.9L-786.6 1579.0L-798.9 1561.6L-811.8 1542.4L-825.3 1521.3L-839.4 1498.1L-854.2 1472.8L-869.7 1445.4L-886.0 1415.6L-903.1 1383.5L-920.9 1348.8L-939.4 1311.4L-958.4 1271.0L-977.6 1227.6L-996.7 1181.3L-1015.6 1132.2L-1034.5 1080.1L-1053.3 1025.1L-1072.1 967.1L-1090.9 906.3L-1109.3 842.9L-1127.3 777.4L-1144.6 710.2L-1161.0 641.7L-1176.2 572.5L-1190.1 502.8L-1202.6 433.0L-1213.6 363.4L-1223.0 294.2L-1230.6 226.1L-1236.3 159.6L-1239.9 95.1L-1241.3 32.8L-1240.4 -27.5L-1237.3 -85.8L-1231.7 -141.7L-1223.7 -194.8L-1213.1 -244.7L-1199.9 -291.1L-1184.1 -333.7L-1165.9 -372.5L-1145.5 -407.0L-1123.0 -436.9L-1098.6 -462.0L-1072.3 -482.4L-1044.6 -498.3L-1015.6 -510.1L-985.6 -518.0L-954.9 -522.2L-923.4 -523.0L-891.5 -520.8L-859.0 -516.1L-826.3 -509.4L-793.3 -501.2L-760.1 -491.7L-726.9 -481.1L-693.8 -469.6L-661.1 -457.5L-628.8 -445.0L-597.2 -432.2L-565.9 -419.2L-535.1 -405.8L-504.5 -392.1L-474.2 -378.0L-444.0 -363.6L-414.1 -348.8L-384.4 -333.7L-354.7 -318.3L-325.2 -302.6L-295.8 -286.5L-266.4 -270.2L-237.1 -253.6L-207.8 -236.7L-178.6 -219.6L-149.5 -202.3L-120.4 -184.8L-91.4 -167.1L-62.4 -149.2L-33.4 -131.1L-4.4 -112.9L24.6 -94.5L53.6 -76.0L82.6 -57.4L111.6 -38.6L140.6 -19.8L169.6 -0.8L198.5 18.2L227.5 37.3L256.5 56.4L285.4 75.6L314.3 94.9L343.2 114.1L372.1 133.4L400.9 152.7L429.7 172.1L458.4 191.4L487.1 210.7L515.7 229.9L544.1 249.2L572.5 268.4L600.8 287.5L629.0 306.6L657.0 325.6L684.9 344.6L712.6 363.4L740.1 382.1L767.5 400.7L794.6 419.2L821.5 437.5L848.2 455.6L874.7 473.6L900.9 491.4L926.8 509.0L952.5 526.4L977.8 543.5L1002.8 560.5L1027.4 577.1L1051.7 593.6L1075.6 609.8L1099.1 625.8L1122.2 641.5L1144.8 656.9L1166.8 671.9L1188.2 686.5L1208.9 700.6L1228.9 714.2L1248.4 727.4L1267.4 740.3L1285.9 752.8L1304.1 765.2L1321.9 777.2L1339.1 789.0L1355.8 800.3L1371.9 811.2L1387.2 821.6L1402.0 831.5L1416.2 841.1L1429.8 850.3L1442.9 859.2L1455.5 867.8L1467.6 876.0L1479.2 883.9L1490.3 891.4L1501.0 898.6L1511.1 905.5L1520.8 912.1L1530.0 918.4L1538.8 924.4L1547.3 930.2L1555.3 935.6L1563.0 940.8L1570.4 945.8L1577.4 950.6L1584.2 955.1L1590.6 959.5L1596.8 963.7L1602.6 967.7L1608.3 971.5L1613.8 975.3L1619.1 978.9L1624.3 982.4L1629.2 985.7L1634.0 989.0L1638.6 992.1L1643.0 995.1L1647.2 998.0L1651.3 1000.7L1655.2 1003.4L1658.9 1005.9L1662.4 1008.3L1665.8 1010.7L1669.1 1012.9L1672.2 1015.0L1675.1 1016.9L1677.8 1018.8L1680.3 1020.5L1682.7 1022.1L1685.0 1023.6L1687.1 1025.1L1689.1 1026.4L1691.1 1027.8L1692.9 1029.0L1694.7 1030.2L1696.3 1031.4L1697.9 1032.4L1699.4 1033.4L1700.7 1034.4L1702.0 1035.2L1703.2 1036.0L1704.3 1036.8L1705.3 1037.4L1706.1 1038.1L1707.0 1038.6L1707.8 1039.1L1708.5 1039.7L1709.3 1040.2L1710.0 1040.7L1710.7 1041.2L1712.1 1042.1L1713.2 1042.9L1714.4 1043.6L1715.5 1044.4L1716.6 1045.2L1717.7 1045.9L1718.8 1046.7L1719.7 1047.3L1720.7 1048.0L1721.5 1048.5L1722.3 1049.1L1722.3 1049.1Z"/></clipPath>
</defs>
<g clip-path="url(#lc)" shape-rendering="crispEdges"><rect x="106" y="212" width="18" height="3" fill="url(#g0)"/>
<rect x="97" y="215" width="38" height="3" fill="url(#g1)"/>
<rect x="92" y="218" width="52" height="3" fill="url(#g2)"/>
<rect x="89" y="221" width="62" height="3" fill="url(#g3)"/>
<rect x="86" y="224" width="72" height="3" fill="url(#g4)"/>
<rect x="83" y="227" width="80" height="3" fill="url(#g5)"/>
<rect x="81" y="230" width="88" height="3" fill="url(#g6)"/>
<rect x="80" y="233" width="95" height="3" fill="url(#g7)"/>
<rect x="78" y="236" width="102" height="3" fill="url(#g8)"/>
<rect x="76" y="239" width="109" height="3" fill="url(#g9)"/>
<rect x="75" y="242" width="115" height="3" fill="url(#g10)"/>
<rect x="74" y="245" width="121" height="3" fill="url(#g11)"/>
<rect x="73" y="248" width="127" height="3" fill="url(#g12)"/>
<rect x="72" y="251" width="132" height="3" fill="url(#g13)"/>
<rect x="71" y="254" width="138" height="3" fill="url(#g14)"/>
<rect x="70" y="257" width="143" height="3" fill="url(#g15)"/>
<rect x="69" y="260" width="148" height="3" fill="url(#g16)"/>
<rect x="68" y="263" width="153" height="3" fill="url(#g17)"/>
<rect x="68" y="266" width="158" height="3" fill="url(#g18)"/>
<rect x="67" y="269" width="162" height="3" fill="url(#g19)"/>
<rect x="66" y="272" width="167" height="3" fill="url(#g20)"/>
<rect x="66" y="275" width="171" height="3" fill="url(#g21)"/>
<rect x="65" y="278" width="176" height="3" fill="url(#g22)"/>
<rect x="65" y="281" width="180" height="3" fill="url(#g23)"/>
<rect x="64" y="284" width="184" height="3" fill="url(#g24)"/>
<rect x="64" y="287" width="188" height="3" fill="url(#g25)"/>
<rect x="64" y="290" width="192" height="3" fill="url(#g26)"/>
<rect x="63" y="293" width="196" height="3" fill="url(#g27)"/>
<rect x="63" y="296" width="200" height="3" fill="url(#g28)"/>
<rect x="63" y="299" width="204" height="3" fill="url(#g29)"/>
<rect x="63" y="302" width="208" height="3" fill="url(#g30)"/>
<rect x="62" y="305" width="212" height="3" fill="url(#g31)"/>
<rect x="62" y="308" width="215" height="3" fill="url(#g32)"/>
<rect x="62" y="311" width="219" height="3" fill="url(#g33)"/>
<rect x="62" y="314" width="223" height="3" fill="url(#g34)"/>
<rect x="62" y="317" width="226" height="3" fill="url(#g35)"/>
<rect x="62" y="320" width="230" height="3" fill="url(#g36)"/>
<rect x="62" y="323" width="233" height="3" fill="url(#g37)"/>
<rect x="62" y="326" width="237" height="3" fill="url(#g38)"/>
<rect x="61" y="329" width="240" height="3" fill="url(#g39)"/>
<rect x="61" y="332" width="244" height="3" fill="url(#g40)"/>
<rect x="61" y="335" width="247" height="3" fill="url(#g41)"/>
<rect x="61" y="338" width="251" height="3" fill="url(#g42)"/>
<rect x="62" y="341" width="254" height="3" fill="url(#g43)"/>
<rect x="62" y="344" width="257" height="3" fill="url(#g44)"/>
<rect x="62" y="347" width="261" height="3" fill="url(#g45)"/>
<rect x="62" y="350" width="264" height="3" fill="url(#g46)"/>
<rect x="62" y="353" width="267" height="3" fill="url(#g47)"/>
<rect x="62" y="356" width="270" height="3" fill="url(#g48)"/>
<rect x="62" y="359" width="274" height="3" fill="url(#g49)"/>
<rect x="62" y="362" width="277" height="3" fill="url(#g50)"/>
<rect x="62" y="365" width="280" height="3" fill="url(#g51)"/>
<rect x="62" y="368" width="283" height="3" fill="url(#g52)"/>
<rect x="63" y="371" width="286" height="3" fill="url(#g53)"/>
<rect x="63" y="374" width="290" height="3" fill="url(#g54)"/>
<rect x="63" y="377" width="293" height="3" fill="url(#g55)"/>
<rect x="63" y="380" width="296" height="3" fill="url(#g56)"/>
<rect x="64" y="383" width="299" height="3" fill="url(#g57)"/>
<rect x="64" y="386" width="302" height="3" fill="url(#g58)"/>
<rect x="64" y="389" width="305" height="3" fill="url(#g59)"/>
<rect x="64" y="392" width="308" height="3" fill="url(#g60)"/>
<rect x="65" y="395" width="311" height="3" fill="url(#g61)"/>
<rect x="65" y="398" width="314" height="3" fill="url(#g62)"/>
<rect x="65" y="401" width="317" height="3" fill="url(#g63)"/>
<rect x="65" y="404" width="320" height="3" fill="url(#g64)"/>
<rect x="66" y="407" width="323" height="3" fill="url(#g65)"/>
<rect x="66" y="410" width="326" height="3" fill="url(#g66)"/>
<rect x="66" y="413" width="329" height="3" fill="url(#g67)"/>
<rect x="67" y="416" width="332" height="3" fill="url(#g68)"/>
<rect x="67" y="419" width="335" height="3" fill="url(#g69)"/>
<rect x="68" y="422" width="338" height="3" fill="url(#g70)"/>
<rect x="68" y="425" width="341" height="3" fill="url(#g71)"/>
<rect x="68" y="428" width="344" height="3" fill="url(#g72)"/>
<rect x="69" y="431" width="347" height="3" fill="url(#g73)"/>
<rect x="69" y="434" width="350" height="3" fill="url(#g74)"/>
<rect x="69" y="437" width="353" height="3" fill="url(#g75)"/>
<rect x="70" y="440" width="356" height="3" fill="url(#g76)"/>
<rect x="70" y="443" width="359" height="3" fill="url(#g77)"/>
<rect x="71" y="446" width="362" height="3" fill="url(#g78)"/>
<rect x="71" y="449" width="364" height="3" fill="url(#g79)"/>
<rect x="72" y="452" width="367" height="3" fill="url(#g80)"/>
<rect x="72" y="455" width="370" height="3" fill="url(#g81)"/>
<rect x="73" y="458" width="373" height="3" fill="url(#g82)"/>
<rect x="73" y="461" width="376" height="3" fill="url(#g83)"/>
<rect x="74" y="464" width="379" height="3" fill="url(#g84)"/>
<rect x="74" y="467" width="381" height="3" fill="url(#g85)"/>
<rect x="75" y="470" width="384" height="3" fill="url(#g86)"/>
<rect x="75" y="473" width="387" height="3" fill="url(#g87)"/>
<rect x="76" y="476" width="390" height="3" fill="url(#g88)"/>
<rect x="76" y="479" width="393" height="3" fill="url(#g89)"/>
<rect x="77" y="482" width="395" height="3" fill="url(#g90)"/>
<rect x="77" y="485" width="398" height="3" fill="url(#g91)"/>
<rect x="78" y="488" width="401" height="3" fill="url(#g92)"/>
<rect x="78" y="491" width="404" height="3" fill="url(#g93)"/>
<rect x="79" y="494" width="406" height="3" fill="url(#g94)"/>
<rect x="80" y="497" width="409" height="3" fill="url(#g95)"/>
<rect x="80" y="500" width="412" height="3" fill="url(#g96)"/>
<rect x="81" y="503" width="415" height="3" fill="url(#g97)"/>
<rect x="81" y="506" width="417" height="3" fill="url(#g98)"/>
<rect x="82" y="509" width="420" height="3" fill="url(#g99)"/>
<rect x="83" y="512" width="423" height="3" fill="url(#g100)"/>
<rect x="83" y="515" width="426" height="3" fill="url(#g101)"/>
<rect x="84" y="518" width="428" height="3" fill="url(#g102)"/>
<rect x="85" y="521" width="431" height="3" fill="url(#g103)"/>
<rect x="85" y="524" width="434" height="3" fill="url(#g104)"/>
<rect x="86" y="527" width="436" height="3" fill="url(#g105)"/>
<rect x="87" y="530" width="439" height="3" fill="url(#g106)"/>
<rect x="87" y="533" width="441" height="3" fill="url(#g107)"/>
<rect x="88" y="536" width="444" height="3" fill="url(#g108)"/>
<rect x="89" y="539" width="447" height="3" fill="url(#g109)"/>
<rect x="89" y="542" width="449" height="3" fill="url(#g110)"/>
<rect x="90" y="545" width="452" height="3" fill="url(#g111)"/>
<rect x="91" y="548" width="455" height="3" fill="url(#g112)"/>
<rect x="92" y="551" width="457" height="3" fill="url(#g113)"/>
<rect x="92" y="554" width="460" height="3" fill="url(#g114)"/>
<rect x="93" y="557" width="462" height="3" fill="url(#g115)"/>
<rect x="94" y="560" width="461" height="3" fill="url(#g116)"/>
<rect x="95" y="563" width="456" height="3" fill="url(#g117)"/>
<rect x="95" y="566" width="448" height="3" fill="url(#g118)"/>
<rect x="96" y="569" width="440" height="3" fill="url(#g119)"/>
<rect x="97" y="572" width="432" height="3" fill="url(#g120)"/>
<rect x="98" y="575" width="424" height="3" fill="url(#g121)"/>
<rect x="99" y="578" width="416" height="3" fill="url(#g122)"/>
<rect x="99" y="581" width="408" height="3" fill="url(#g123)"/>
<rect x="100" y="584" width="400" height="3" fill="url(#g124)"/>
<rect x="101" y="587" width="392" height="3" fill="url(#g125)"/>
<rect x="102" y="590" width="384" height="3" fill="url(#g126)"/>
<rect x="103" y="593" width="376" height="3" fill="url(#g127)"/>
<rect x="104" y="596" width="368" height="3" fill="url(#g128)"/>
<rect x="105" y="599" width="360" height="3" fill="url(#g129)"/>
<rect x="106" y="602" width="352" height="3" fill="url(#g130)"/>
<rect x="107" y="605" width="344" height="3" fill="url(#g131)"/>
<rect x="108" y="608" width="336" height="3" fill="url(#g132)"/>
<rect x="109" y="611" width="328" height="3" fill="url(#g133)"/>
<rect x="110" y="614" width="319" height="3" fill="url(#g134)"/>
<rect x="111" y="617" width="311" height="3" fill="url(#g135)"/>
<rect x="112" y="620" width="303" height="3" fill="url(#g136)"/>
<rect x="113" y="623" width="295" height="3" fill="url(#g137)"/>
<rect x="114" y="626" width="286" height="3" fill="url(#g138)"/>
<rect x="115" y="629" width="278" height="3" fill="url(#g139)"/>
<rect x="117" y="632" width="270" height="3" fill="url(#g140)"/>
<rect x="118" y="635" width="262" height="3" fill="url(#g141)"/>
<rect x="119" y="638" width="253" height="3" fill="url(#g142)"/>
<rect x="120" y="641" width="245" height="3" fill="url(#g143)"/>
<rect x="121" y="644" width="237" height="3" fill="url(#g144)"/>
<rect x="123" y="647" width="228" height="3" fill="url(#g145)"/>
<rect x="124" y="650" width="220" height="3" fill="url(#g146)"/>
<rect x="125" y="653" width="211" height="3" fill="url(#g147)"/>
<rect x="126" y="656" width="203" height="3" fill="url(#g148)"/>
<rect x="128" y="659" width="195" height="3" fill="url(#g149)"/>
<rect x="129" y="662" width="186" height="3" fill="url(#g150)"/>
<rect x="131" y="665" width="178" height="3" fill="url(#g151)"/>
<rect x="132" y="668" width="169" height="3" fill="url(#g152)"/>
<rect x="133" y="671" width="160" height="3" fill="url(#g153)"/>
<rect x="135" y="674" width="152" height="3" fill="url(#g154)"/>
<rect x="137" y="677" width="143" height="3" fill="url(#g155)"/>
<rect x="138" y="680" width="134" height="3" fill="url(#g156)"/>
<rect x="140" y="683" width="125" height="3" fill="url(#g157)"/>
<rect x="142" y="686" width="117" height="3" fill="url(#g158)"/>
<rect x="144" y="689" width="107" height="3" fill="url(#g159)"/>
<rect x="146" y="692" width="98" height="3" fill="url(#g160)"/>
<rect x="148" y="695" width="89" height="3" fill="url(#g161)"/>
<rect x="150" y="698" width="80" height="3" fill="url(#g162)"/>
<rect x="153" y="701" width="70" height="3" fill="url(#g163)"/>
<rect x="156" y="704" width="60" height="3" fill="url(#g164)"/>
<rect x="159" y="707" width="50" height="3" fill="url(#g165)"/>
<rect x="162" y="710" width="39" height="3" fill="url(#g166)"/>
<rect x="166" y="713" width="28" height="3" fill="url(#g167)"/>
<rect x="170" y="716" width="17" height="3" fill="url(#g168)"/>
<rect x="174" y="719" width="6" height="3" fill="url(#g169)"/>
<path d="M0 150H700V800H0Z M536.1 544.4L174.7 236.9L148.5 694.2Z" fill="#000" fill-opacity=".4" fill-rule="evenodd" shape-rendering="geometricPrecision"/>
</g>
<rect x="61" y="209.300" width="566.200" height="512.600" fill="none" stroke="#9c9c9c" stroke-width="2.100"/>
<path d="M60.8 722.500V729.500" stroke="#b4b4b4" stroke-width="1.3"/>
<text x="60.8" y="746.800" font-size="15.800" fill="#d2d2d2" text-anchor="middle">0</text>
<path d="M54 722.8H60.500" stroke="#b4b4b4" stroke-width="1.3"/>
<text x="53.300" y="728.8" font-size="17" fill="#d2d2d2" text-anchor="end">0</text>
<path d="M128.1 722.500V729.500" stroke="#b4b4b4" stroke-width="1.3"/>
<text x="128.1" y="746.800" font-size="15.800" fill="#d2d2d2" text-anchor="middle">0.1</text>
<path d="M54 661.8H60.500" stroke="#b4b4b4" stroke-width="1.3"/>
<text x="53.300" y="667.8" font-size="17" fill="#d2d2d2" text-anchor="end">0.1</text>
<path d="M195.5 722.500V729.500" stroke="#b4b4b4" stroke-width="1.3"/>
<text x="195.5" y="746.800" font-size="15.800" fill="#d2d2d2" text-anchor="middle">0.2</text>
<path d="M54 600.7H60.500" stroke="#b4b4b4" stroke-width="1.3"/>
<text x="53.300" y="606.7" font-size="17" fill="#d2d2d2" text-anchor="end">0.2</text>
<path d="M262.8 722.500V729.500" stroke="#b4b4b4" stroke-width="1.3"/>
<text x="262.8" y="746.800" font-size="15.800" fill="#d2d2d2" text-anchor="middle">0.3</text>
<path d="M54 539.7H60.500" stroke="#b4b4b4" stroke-width="1.3"/>
<text x="53.300" y="545.7" font-size="17" fill="#d2d2d2" text-anchor="end">0.3</text>
<path d="M330.2 722.500V729.500" stroke="#b4b4b4" stroke-width="1.3"/>
<text x="330.2" y="746.800" font-size="15.800" fill="#d2d2d2" text-anchor="middle">0.4</text>
<path d="M54 478.6H60.500" stroke="#b4b4b4" stroke-width="1.3"/>
<text x="53.300" y="484.6" font-size="17" fill="#d2d2d2" text-anchor="end">0.4</text>
<path d="M397.5 722.500V729.500" stroke="#b4b4b4" stroke-width="1.3"/>
<text x="397.5" y="746.800" font-size="15.800" fill="#d2d2d2" text-anchor="middle">0.5</text>
<path d="M54 417.6H60.500" stroke="#b4b4b4" stroke-width="1.3"/>
<text x="53.300" y="423.6" font-size="17" fill="#d2d2d2" text-anchor="end">0.5</text>
<path d="M464.8 722.500V729.500" stroke="#b4b4b4" stroke-width="1.3"/>
<text x="464.8" y="746.800" font-size="15.800" fill="#d2d2d2" text-anchor="middle">0.6</text>
<path d="M54 356.6H60.500" stroke="#b4b4b4" stroke-width="1.3"/>
<text x="53.300" y="362.6" font-size="17" fill="#d2d2d2" text-anchor="end">0.6</text>
<path d="M532.2 722.500V729.500" stroke="#b4b4b4" stroke-width="1.3"/>
<text x="532.2" y="746.800" font-size="15.800" fill="#d2d2d2" text-anchor="middle">0.7</text>
<path d="M54 295.5H60.500" stroke="#b4b4b4" stroke-width="1.3"/>
<text x="53.300" y="301.5" font-size="17" fill="#d2d2d2" text-anchor="end">0.7</text>
<path d="M599.5 722.500V729.500" stroke="#b4b4b4" stroke-width="1.3"/>
<text x="599.5" y="746.800" font-size="15.800" fill="#d2d2d2" text-anchor="middle">0.8</text>
<path d="M54 234.5H60.500" stroke="#b4b4b4" stroke-width="1.3"/>
<text x="53.300" y="240.5" font-size="17" fill="#d2d2d2" text-anchor="end">0.8</text>
<text x="329" y="203" font-size="16.200" fill="#d2d2d2" text-anchor="middle">CIE 1931 xy</text>
<rect x="391" y="213" width="232.500" height="162.500" fill="#2c2c2c"/>
<rect x="395.500" y="218" width="223" height="152" fill="#242424"/>
<g clip-path="url(#ic)"><g clip-path="url(#ilc)" shape-rendering="crispEdges"><rect x="395" y="218" width="109" height="3" fill="url(#h0)"/>
<rect x="395" y="221" width="114" height="3" fill="url(#h1)"/>
<rect x="395" y="224" width="118" height="3" fill="url(#h2)"/>
<rect x="395" y="227" width="123" height="3" fill="url(#h3)"/>
<rect x="395" y="230" width="127" height="3" fill="url(#h4)"/>
<rect x="395" y="233" width="132" height="3" fill="url(#h5)"/>
<rect x="395" y="236" width="136" height="3" fill="url(#h6)"/>
<rect x="395" y="239" width="141" height="3" fill="url(#h7)"/>
<rect x="395" y="242" width="145" height="3" fill="url(#h8)"/>
<rect x="395" y="245" width="149" height="3" fill="url(#h9)"/>
<rect x="395" y="248" width="154" height="3" fill="url(#h10)"/>
<rect x="395" y="251" width="158" height="3" fill="url(#h11)"/>
<rect x="395" y="254" width="163" height="3" fill="url(#h12)"/>
<rect x="395" y="257" width="167" height="3" fill="url(#h13)"/>
<rect x="395" y="260" width="172" height="3" fill="url(#h14)"/>
<rect x="395" y="263" width="176" height="3" fill="url(#h15)"/>
<rect x="395" y="266" width="180" height="3" fill="url(#h16)"/>
<rect x="395" y="269" width="185" height="3" fill="url(#h17)"/>
<rect x="395" y="272" width="189" height="3" fill="url(#h18)"/>
<rect x="395" y="275" width="194" height="3" fill="url(#h19)"/>
<rect x="395" y="278" width="198" height="3" fill="url(#h20)"/>
<rect x="395" y="281" width="203" height="3" fill="url(#h21)"/>
<rect x="395" y="284" width="207" height="3" fill="url(#h22)"/>
<rect x="395" y="287" width="211" height="3" fill="url(#h23)"/>
<rect x="395" y="290" width="216" height="3" fill="url(#h24)"/>
<rect x="395" y="293" width="220" height="3" fill="url(#h25)"/>
<rect x="395" y="296" width="225" height="3" fill="url(#h26)"/>
<rect x="395" y="299" width="225" height="3" fill="url(#h27)"/>
<rect x="395" y="302" width="225" height="3" fill="url(#h28)"/>
<rect x="395" y="305" width="225" height="3" fill="url(#h29)"/>
<rect x="395" y="308" width="225" height="3" fill="url(#h30)"/>
<rect x="395" y="311" width="225" height="3" fill="url(#h31)"/>
<rect x="395" y="314" width="225" height="3" fill="url(#h32)"/>
<rect x="395" y="317" width="225" height="3" fill="url(#h33)"/>
<rect x="395" y="320" width="225" height="3" fill="url(#h34)"/>
<rect x="395" y="323" width="225" height="3" fill="url(#h35)"/>
<rect x="395" y="326" width="225" height="3" fill="url(#h36)"/>
<rect x="395" y="329" width="225" height="3" fill="url(#h37)"/>
<rect x="395" y="332" width="225" height="3" fill="url(#h38)"/>
<rect x="395" y="335" width="225" height="3" fill="url(#h39)"/>
<rect x="395" y="338" width="225" height="3" fill="url(#h40)"/>
<rect x="395" y="341" width="225" height="3" fill="url(#h41)"/>
<rect x="395" y="344" width="225" height="3" fill="url(#h42)"/>
<rect x="395" y="347" width="225" height="3" fill="url(#h43)"/>
<rect x="395" y="350" width="225" height="3" fill="url(#h44)"/>
<rect x="395" y="353" width="225" height="3" fill="url(#h45)"/>
<rect x="395" y="356" width="225" height="3" fill="url(#h46)"/>
<rect x="395" y="359" width="225" height="3" fill="url(#h47)"/>
<rect x="395" y="362" width="225" height="3" fill="url(#h48)"/>
<rect x="395" y="365" width="225" height="3" fill="url(#h49)"/>
<rect x="395" y="368" width="225" height="2" fill="url(#h50)"/>
<path d="M300 100H700V500H300Z M1614.1 975.3L-566.9 -420.5L-725.0 1655.3Z" fill="#000" fill-opacity=".4" fill-rule="evenodd" shape-rendering="geometricPrecision"/>
</g></g>
<rect x="394.600" y="217.100" width="224.800" height="153.800" fill="none" stroke="#9a9a9a" stroke-width="1.8"/>
<rect x="498.500" y="284.500" width="16" height="16" fill="none" stroke="#fff" stroke-width="1.5"/>
<circle cx="586.300" cy="356.400" r="4.600" fill="#4a4a18" stroke="#0a0a0a" stroke-width="1.300"/>
<rect x="229.8" y="288.8" width="15.500" height="15.500" fill="none" stroke="#fff" stroke-width="1.5"/>
<rect x="237.1" y="335.9" width="15.500" height="15.500" fill="none" stroke="#fff" stroke-width="1.5"/>
<rect x="244.9" y="381.2" width="15.500" height="15.500" fill="none" stroke="#fff" stroke-width="1.5"/>
<rect x="247.7" y="425.2" width="15.500" height="15.500" fill="none" stroke="#fff" stroke-width="1.5"/>
<rect x="255.9" y="466.6" width="15.500" height="15.500" fill="none" stroke="#fff" stroke-width="1.5"/>
<rect x="345.9" y="385.1" width="15.500" height="15.500" fill="none" stroke="#fff" stroke-width="1.5"/>
<rect x="328.4" y="409.8" width="15.500" height="15.500" fill="none" stroke="#fff" stroke-width="1.5"/>
<rect x="311.9" y="432.8" width="15.500" height="15.500" fill="none" stroke="#fff" stroke-width="1.5"/>
<rect x="297.6" y="463.2" width="15.500" height="15.500" fill="none" stroke="#fff" stroke-width="1.5"/>
<rect x="280.6" y="486.6" width="15.500" height="15.500" fill="none" stroke="#fff" stroke-width="1.5"/>
<rect x="185.4" y="511.8" width="15.500" height="15.500" fill="none" stroke="#fff" stroke-width="1.5"/>
<rect x="202.7" y="514.1" width="15.500" height="15.500" fill="none" stroke="#fff" stroke-width="1.5"/>
<rect x="219.2" y="514.1" width="15.500" height="15.500" fill="none" stroke="#fff" stroke-width="1.5"/>
<rect x="231.2" y="510.9" width="15.500" height="15.500" fill="none" stroke="#fff" stroke-width="1.5"/>
<rect x="246.2" y="510.9" width="15.500" height="15.500" fill="none" stroke="#fff" stroke-width="1.5"/>
<rect x="314.6" y="511.4" width="15.500" height="15.500" fill="none" stroke="#fff" stroke-width="1.5"/>
<rect x="363.9" y="514.1" width="15.500" height="15.500" fill="none" stroke="#fff" stroke-width="1.5"/>
<rect x="408.9" y="516.5" width="15.500" height="15.500" fill="none" stroke="#fff" stroke-width="1.5"/>
<rect x="461.4" y="517.5" width="15.500" height="15.500" fill="none" stroke="#fff" stroke-width="1.5"/>
<rect x="509.6" y="517.5" width="15.500" height="15.500" fill="none" stroke="#fff" stroke-width="1.5"/>
<rect x="264.6" y="534.8" width="15.500" height="15.500" fill="none" stroke="#fff" stroke-width="1.5"/>
<rect x="266.6" y="555.4" width="15.500" height="15.500" fill="none" stroke="#fff" stroke-width="1.5"/>
<rect x="270.1" y="578.8" width="15.500" height="15.500" fill="none" stroke="#fff" stroke-width="1.5"/>
<rect x="275.9" y="600.0" width="15.500" height="15.500" fill="none" stroke="#fff" stroke-width="1.5"/>
<rect x="275.9" y="621.8" width="15.500" height="15.500" fill="none" stroke="#fff" stroke-width="1.5"/>
<rect x="240.8" y="542.6" width="15.500" height="15.500" fill="none" stroke="#fff" stroke-width="1.5"/>
<rect x="218.8" y="579.5" width="15.500" height="15.500" fill="none" stroke="#fff" stroke-width="1.5"/>
<rect x="196.8" y="610.8" width="15.500" height="15.500" fill="none" stroke="#fff" stroke-width="1.5"/>
<rect x="175.8" y="644.8" width="15.500" height="15.500" fill="none" stroke="#fff" stroke-width="1.5"/>
<rect x="151.8" y="678.1" width="15.500" height="15.500" fill="none" stroke="#fff" stroke-width="1.5"/>
<rect x="263.800" y="511.700" width="15.600" height="15.600" fill="none" stroke="#000" stroke-width="1.8"/>
<circle cx="247.9" cy="310.6" r="4.600" fill="#324b14" stroke="#0a0a0a" stroke-width="1.300"/>
<circle cx="247.9" cy="345.0" r="4.600" fill="#384a20" stroke="#0a0a0a" stroke-width="1.300"/>
<circle cx="254.4" cy="381.8" r="4.600" fill="#3d4a2c" stroke="#0a0a0a" stroke-width="1.300"/>
<circle cx="257.5" cy="439.5" r="4.600" fill="#414936" stroke="#0a0a0a" stroke-width="1.300"/>
<circle cx="266.4" cy="473.7" r="4.600" fill="#45483f" stroke="#0a0a0a" stroke-width="1.300"/>
<circle cx="367.5" cy="406.5" r="4.600" fill="#4a4a18" stroke="#0a0a0a" stroke-width="1.300"/>
<circle cx="345.1" cy="422.7" r="4.600" fill="#494923" stroke="#0a0a0a" stroke-width="1.300"/>
<circle cx="322.1" cy="442.6" r="4.600" fill="#49492e" stroke="#0a0a0a" stroke-width="1.300"/>
<circle cx="303.5" cy="470.7" r="4.600" fill="#494937" stroke="#0a0a0a" stroke-width="1.300"/>
<circle cx="288.8" cy="494.4" r="4.600" fill="#48483f" stroke="#0a0a0a" stroke-width="1.300"/>
<circle cx="195.3" cy="528.8" r="4.600" fill="#284c4c" stroke="#0a0a0a" stroke-width="1.300"/>
<circle cx="207.3" cy="525.3" r="4.600" fill="#304b4a" stroke="#0a0a0a" stroke-width="1.300"/>
<circle cx="226.2" cy="524.3" r="4.600" fill="#384a49" stroke="#0a0a0a" stroke-width="1.300"/>
<circle cx="237.2" cy="518.4" r="4.600" fill="#3e4947" stroke="#0a0a0a" stroke-width="1.300"/>
<circle cx="251.6" cy="524.3" r="4.600" fill="#444846" stroke="#0a0a0a" stroke-width="1.300"/>
<circle cx="330.4" cy="519.5" r="4.600" fill="#48433d" stroke="#0a0a0a" stroke-width="1.300"/>
<circle cx="372.3" cy="522.6" r="4.600" fill="#493b32" stroke="#0a0a0a" stroke-width="1.300"/>
<circle cx="421.4" cy="521.5" r="4.600" fill="#493225" stroke="#0a0a0a" stroke-width="1.300"/>
<circle cx="464.4" cy="525.0" r="4.600" fill="#492916" stroke="#0a0a0a" stroke-width="1.300"/>
<circle cx="512.2" cy="522.6" r="4.600" fill="#4a1e06" stroke="#0a0a0a" stroke-width="1.300"/>
<circle cx="274.3" cy="545.9" r="4.600" fill="#484346" stroke="#0a0a0a" stroke-width="1.300"/>
<circle cx="276.0" cy="567.3" r="4.600" fill="#493c47" stroke="#0a0a0a" stroke-width="1.300"/>
<circle cx="271.2" cy="590.3" r="4.600" fill="#4a3349" stroke="#0a0a0a" stroke-width="1.300"/>
<circle cx="276.0" cy="612.0" r="4.600" fill="#4b2a4a" stroke="#0a0a0a" stroke-width="1.300"/>
<circle cx="277.4" cy="632.2" r="4.600" fill="#4c204c" stroke="#0a0a0a" stroke-width="1.300"/>
<circle cx="247.9" cy="556.6" r="4.600" fill="#434247" stroke="#0a0a0a" stroke-width="1.300"/>
<circle cx="221.7" cy="592.0" r="4.600" fill="#3d3a49" stroke="#0a0a0a" stroke-width="1.300"/>
<circle cx="201.4" cy="620.9" r="4.600" fill="#35304c" stroke="#0a0a0a" stroke-width="1.300"/>
<circle cx="183.6" cy="651.5" r="4.600" fill="#2c254f" stroke="#0a0a0a" stroke-width="1.300"/>
<circle cx="165.7" cy="682.4" r="4.600" fill="#231952" stroke="#0a0a0a" stroke-width="1.300"/>
<circle cx="271.600" cy="519.500" r="4.800" fill="#fff" stroke="#000" stroke-width="1.2"/>
<circle cx="285.700" cy="518.400" r="5.600" fill="#000"/>
<text x="451.700" y="679.700" font-size="16.600" fill="#f0f0f0" textLength="171.500">RGB Triplet: 81, 82, 33</text>
<text x="437.300" y="710.900" font-size="16.600" fill="#f0f0f0" textLength="186">Gamut Coverage: 67.5%</text>
</svg>
<svg width="1920" height="1080" viewBox="0 0 1920 1080">
<rect x="679.1" y="218.2" width="549.2" height="506.8" fill="#242424"/>
<text x="941" y="212" font-size="16.600" fill="#d2d2d2" text-anchor="middle" textLength="77">DeltaE ITP</text>
<path d="M671.500 725.00H678.1" stroke="#d8d8d8" stroke-width="1.400"/>
<text x="671.300" y="731.1" font-size="17" fill="#d2d2d2" text-anchor="end">0</text>
<path d="M679.1 658.80H1228.3" stroke="#848484" stroke-width="1.900"/>
<path d="M671.500 658.80H678.1" stroke="#d8d8d8" stroke-width="1.400"/>
<text x="671.300" y="664.9" font-size="17" fill="#d2d2d2" text-anchor="end">2</text>
<path d="M679.1 590.75H1228.3" stroke="#848484" stroke-width="1.900"/>
<path d="M671.500 590.75H678.1" stroke="#d8d8d8" stroke-width="1.400"/>
<text x="671.300" y="596.9" font-size="17" fill="#d2d2d2" text-anchor="end">4</text>
<path d="M679.1 523.25H1228.3" stroke="#848484" stroke-width="1.900"/>
<path d="M671.500 523.25H678.1" stroke="#d8d8d8" stroke-width="1.400"/>
<text x="671.300" y="529.4" font-size="17" fill="#d2d2d2" text-anchor="end">6</text>
<path d="M679.1 456.25H1228.3" stroke="#848484" stroke-width="1.900"/>
<path d="M671.500 456.25H678.1" stroke="#d8d8d8" stroke-width="1.400"/>
<text x="671.300" y="462.4" font-size="17" fill="#d2d2d2" text-anchor="end">8</text>
<path d="M679.1 388.50H1228.3" stroke="#848484" stroke-width="1.900"/>
<path d="M671.500 388.50H678.1" stroke="#d8d8d8" stroke-width="1.400"/>
<text x="671.300" y="394.6" font-size="17" fill="#d2d2d2" text-anchor="end">10</text>
<path d="M679.1 319.75H1228.3" stroke="#848484" stroke-width="1.900"/>
<path d="M671.500 319.75H678.1" stroke="#d8d8d8" stroke-width="1.400"/>
<text x="671.300" y="325.9" font-size="17" fill="#d2d2d2" text-anchor="end">12</text>
<path d="M679.1 253.25H1228.3" stroke="#848484" stroke-width="1.900"/>
<path d="M671.500 253.25H678.1" stroke="#d8d8d8" stroke-width="1.400"/>
<text x="671.300" y="259.4" font-size="17" fill="#d2d2d2" text-anchor="end">14</text>
<defs><linearGradient id="bR0" x1="0" y1="0" x2="0" y2="1"><stop offset="0" stop-color="#918b88"/><stop offset=".28" stop-color="#544945"/><stop offset="1" stop-color="#322d2a"/></linearGradient><linearGradient id="bG0" x1="0" y1="0" x2="0" y2="1"><stop offset="0" stop-color="#8e8e89"/><stop offset=".28" stop-color="#4f4f47"/><stop offset="1" stop-color="#302f2b"/></linearGradient><linearGradient id="bB0" x1="0" y1="0" x2="0" y2="1"><stop offset="0" stop-color="#8c898e"/><stop offset=".28" stop-color="#4b474f"/><stop offset="1" stop-color="#2e2b30"/></linearGradient><linearGradient id="bC0" x1="0" y1="0" x2="0" y2="1"><stop offset="0" stop-color="#8d8e8e"/><stop offset=".28" stop-color="#4d4f4e"/><stop offset="1" stop-color="#2f2f2f"/></linearGradient><linearGradient id="bM0" x1="0" y1="0" x2="0" y2="1"><stop offset="0" stop-color="#918a8e"/><stop offset=".28" stop-color="#53494e"/><stop offset="1" stop-color="#312c2f"/></linearGradient><linearGradient id="bY0" x1="0" y1="0" x2="0" y2="1"><stop offset="0" stop-color="#8f8d89"/><stop offset=".28" stop-color="#514d46"/><stop offset="1" stop-color="#302f2b"/></linearGradient><linearGradient id="bR1" x1="0" y1="0" x2="0" y2="1"><stop offset="0" stop-color="#958882"/><stop offset=".28" stop-color="#59443b"/><stop offset="1" stop-color="#352a26"/></linearGradient><linearGradient id="bG1" x1="0" y1="0" x2="0" y2="1"><stop offset="0" stop-color="#8e9185"/><stop offset=".28" stop-color="#4e5240"/><stop offset="1" stop-color="#2f3128"/></linearGradient><linearGradient id="bB1" x1="0" y1="0" x2="0" y2="1"><stop offset="0" stop-color="#888493"/><stop offset=".28" stop-color="#443f56"/><stop offset="1" stop-color="#2a2733"/></linearGradient><linearGradient id="bC1" x1="0" y1="0" x2="0" y2="1"><stop offset="0" stop-color="#8a9190"/><stop offset=".28" stop-color="#495352"/><stop offset="1" stop-color="#2c3131"/></linearGradient><linearGradient id="bM1" x1="0" y1="0" x2="0" y2="1"><stop offset="0" stop-color="#938791"/><stop offset=".28" stop-color="#564453"/><stop offset="1" stop-color="#332a31"/></linearGradient><linearGradient id="bY1" x1="0" y1="0" x2="0" y2="1"><stop offset="0" stop-color="#908e83"/><stop offset=".28" stop-color="#524f3e"/><stop offset="1" stop-color="#312f27"/></linearGradient><linearGradient id="bR2" x1="0" y1="0" x2="0" y2="1"><stop offset="0" stop-color="#99847a"/><stop offset=".28" stop-color="#603f2f"/><stop offset="1" stop-color="#382720"/></linearGradient><linearGradient id="bG2" x1="0" y1="0" x2="0" y2="1"><stop offset="0" stop-color="#8c9480"/><stop offset=".28" stop-color="#4c5738"/><stop offset="1" stop-color="#2e3424"/></linearGradient><linearGradient id="bB2" x1="0" y1="0" x2="0" y2="1"><stop offset="0" stop-color="#827e98"/><stop offset=".28" stop-color="#3c355e"/><stop offset="1" stop-color="#262237"/></linearGradient><linearGradient id="bC2" x1="0" y1="0" x2="0" y2="1"><stop offset="0" stop-color="#879494"/><stop offset=".28" stop-color="#435858"/><stop offset="1" stop-color="#2a3434"/></linearGradient><linearGradient id="bM2" x1="0" y1="0" x2="0" y2="1"><stop offset="0" stop-color="#968394"/><stop offset=".28" stop-color="#5b3e59"/><stop offset="1" stop-color="#362734"/></linearGradient><linearGradient id="bY2" x1="0" y1="0" x2="0" y2="1"><stop offset="0" stop-color="#91907d"/><stop offset=".28" stop-color="#535134"/><stop offset="1" stop-color="#323122"/></linearGradient><linearGradient id="bR3" x1="0" y1="0" x2="0" y2="1"><stop offset="0" stop-color="#9e8072"/><stop offset=".28" stop-color="#683922"/><stop offset="1" stop-color="#3c2419"/></linearGradient><linearGradient id="bG3" x1="0" y1="0" x2="0" y2="1"><stop offset="0" stop-color="#8b977a"/><stop offset=".28" stop-color="#4a5c30"/><stop offset="1" stop-color="#2d3620"/></linearGradient><linearGradient id="bB3" x1="0" y1="0" x2="0" y2="1"><stop offset="0" stop-color="#7c779d"/><stop offset=".28" stop-color="#322a66"/><stop offset="1" stop-color="#211d3b"/></linearGradient><linearGradient id="bC3" x1="0" y1="0" x2="0" y2="1"><stop offset="0" stop-color="#839898"/><stop offset=".28" stop-color="#3e5e5d"/><stop offset="1" stop-color="#273737"/></linearGradient><linearGradient id="bM3" x1="0" y1="0" x2="0" y2="1"><stop offset="0" stop-color="#997f99"/><stop offset=".28" stop-color="#60375f"/><stop offset="1" stop-color="#382437"/></linearGradient><linearGradient id="bY3" x1="0" y1="0" x2="0" y2="1"><stop offset="0" stop-color="#929176"/><stop offset=".28" stop-color="#54532a"/><stop offset="1" stop-color="#32321d"/></linearGradient><linearGradient id="bR4" x1="0" y1="0" x2="0" y2="1"><stop offset="0" stop-color="#a37c69"/><stop offset=".28" stop-color="#703214"/><stop offset="1" stop-color="#402112"/></linearGradient><linearGradient id="bG4" x1="0" y1="0" x2="0" y2="1"><stop offset="0" stop-color="#8a9b74"/><stop offset=".28" stop-color="#486226"/><stop offset="1" stop-color="#2c391b"/></linearGradient><linearGradient id="bB4" x1="0" y1="0" x2="0" y2="1"><stop offset="0" stop-color="#756fa3"/><stop offset=".28" stop-color="#281e70"/><stop offset="1" stop-color="#1c1740"/></linearGradient><linearGradient id="bC4" x1="0" y1="0" x2="0" y2="1"><stop offset="0" stop-color="#7f9c9c"/><stop offset=".28" stop-color="#376464"/><stop offset="1" stop-color="#243a3a"/></linearGradient><linearGradient id="bM4" x1="0" y1="0" x2="0" y2="1"><stop offset="0" stop-color="#9d7b9d"/><stop offset=".28" stop-color="#663066"/><stop offset="1" stop-color="#3b203b"/></linearGradient><linearGradient id="bY4" x1="0" y1="0" x2="0" y2="1"><stop offset="0" stop-color="#93936f"/><stop offset=".28" stop-color="#56561e"/><stop offset="1" stop-color="#333317"/></linearGradient><linearGradient id="bW" x1="0" y1="0" x2="0" y2="1"><stop offset="0" stop-color="#fff"/><stop offset=".5" stop-color="#f4f4f4"/><stop offset="1" stop-color="#aaa"/></linearGradient></defs>
<rect x="821.2" y="703.1" width="7" height="21.9" fill="url(#bW)" stroke="#000" stroke-width="1"/>
<rect x="843.5" y="523.3" width="7" height="201.7" fill="url(#bR0)" stroke="#000" stroke-width="1.600"/>
<rect x="852.9" y="640.2" width="7" height="84.8" fill="url(#bG0)" stroke="#000" stroke-width="1.600"/>
<rect x="862.3" y="577.9" width="7" height="147.1" fill="url(#bB0)" stroke="#000" stroke-width="1.600"/>
<rect x="871.7" y="577.9" width="7" height="147.1" fill="url(#bC0)" stroke="#000" stroke-width="1.600"/>
<rect x="881.1" y="534.1" width="7" height="190.9" fill="url(#bM0)" stroke="#000" stroke-width="1.600"/>
<rect x="890.5" y="643.9" width="7" height="81.1" fill="url(#bY0)" stroke="#000" stroke-width="1.600"/>
<rect x="922.0" y="604.2" width="7" height="120.8" fill="url(#bR1)" stroke="#000" stroke-width="1.600"/>
<rect x="931.4" y="568.5" width="7" height="156.5" fill="url(#bG1)" stroke="#000" stroke-width="1.600"/>
<rect x="940.8" y="558.0" width="7" height="167.0" fill="url(#bB1)" stroke="#000" stroke-width="1.600"/>
<rect x="950.2" y="564.1" width="7" height="160.9" fill="url(#bC1)" stroke="#000" stroke-width="1.600"/>
<rect x="959.6" y="556.3" width="7" height="168.7" fill="url(#bM1)" stroke="#000" stroke-width="1.600"/>
<rect x="969.0" y="573.2" width="7" height="151.8" fill="url(#bY1)" stroke="#000" stroke-width="1.600"/>
<rect x="1000.4" y="604.2" width="7" height="120.8" fill="url(#bR2)" stroke="#000" stroke-width="1.600"/>
<rect x="1009.8" y="563.7" width="7" height="161.3" fill="url(#bG2)" stroke="#000" stroke-width="1.600"/>
<rect x="1019.2" y="602.8" width="7" height="122.2" fill="url(#bB2)" stroke="#000" stroke-width="1.600"/>
<rect x="1028.6" y="551.6" width="7" height="173.4" fill="url(#bC2)" stroke="#000" stroke-width="1.600"/>
<rect x="1038.0" y="562.4" width="7" height="162.6" fill="url(#bM2)" stroke="#000" stroke-width="1.600"/>
<rect x="1047.4" y="630.5" width="7" height="94.5" fill="url(#bY2)" stroke="#000" stroke-width="1.600"/>
<rect x="1078.9" y="537.1" width="7" height="187.9" fill="url(#bR3)" stroke="#000" stroke-width="1.600"/>
<rect x="1088.3" y="615.3" width="7" height="109.7" fill="url(#bG3)" stroke="#000" stroke-width="1.600"/>
<rect x="1097.7" y="693.5" width="7" height="31.5" fill="url(#bB3)" stroke="#000" stroke-width="1.600"/>
<rect x="1107.1" y="589.0" width="7" height="136.0" fill="url(#bC3)" stroke="#000" stroke-width="1.600"/>
<rect x="1116.5" y="504.8" width="7" height="220.2" fill="url(#bM3)" stroke="#000" stroke-width="1.600"/>
<rect x="1125.9" y="471.1" width="7" height="253.9" fill="url(#bY3)" stroke="#000" stroke-width="1.600"/>
<rect x="1157.4" y="462.0" width="7" height="263.0" fill="url(#bR4)" stroke="#000" stroke-width="1.600"/>
<rect x="1166.8" y="504.8" width="7" height="220.2" fill="url(#bG4)" stroke="#000" stroke-width="1.600"/>
<rect x="1176.2" y="327.8" width="7" height="397.2" fill="url(#bB4)" stroke="#000" stroke-width="1.600"/>
<rect x="1185.6" y="575.5" width="7" height="149.5" fill="url(#bC4)" stroke="#000" stroke-width="1.600"/>
<rect x="1195.0" y="518.9" width="7" height="206.1" fill="url(#bM4)" stroke="#000" stroke-width="1.600"/>
<rect x="1204.4" y="322.4" width="7" height="402.6" fill="url(#bY4)" stroke="#000" stroke-width="1.600"/>
<path d="M679.1 386.75H1228.3" stroke="#f01010" stroke-width="1.9"/>
<path d="M679.1 624.25H1228.3" stroke="#f8f800" stroke-width="1.5"/>
<path d="M679.1 692.00H1228.3" stroke="#088008" stroke-width="1.4"/>
<rect x="679.1" y="218.2" width="549.2" height="506.8" fill="none" stroke="#989898" stroke-width="2.300"/>
<path d="M679.1 725.0V731.500" stroke="#d0d0d0" stroke-width="1.300"/>
<text x="718.0" y="743.800" font-size="15.800" fill="#d2d2d2" text-anchor="middle">0</text>
<path d="M757.3 725.0V731.500" stroke="#d0d0d0" stroke-width="1.300"/>
<text x="796.5" y="743.800" font-size="15.800" fill="#d2d2d2" text-anchor="middle">100</text>
<path d="M835.8 725.0V731.500" stroke="#d0d0d0" stroke-width="1.300"/>
<text x="875.0" y="743.800" font-size="15.800" fill="#d2d2d2" text-anchor="middle">20%</text>
<path d="M914.3 725.0V731.500" stroke="#d0d0d0" stroke-width="1.300"/>
<text x="953.5" y="743.800" font-size="15.800" fill="#d2d2d2" text-anchor="middle">40%</text>
<path d="M992.7 725.0V731.500" stroke="#d0d0d0" stroke-width="1.300"/>
<text x="1032.0" y="743.800" font-size="15.800" fill="#d2d2d2" text-anchor="middle">60%</text>
<path d="M1071.2 725.0V731.500" stroke="#d0d0d0" stroke-width="1.300"/>
<text x="1110.5" y="743.800" font-size="15.800" fill="#d2d2d2" text-anchor="middle">80%</text>
<path d="M1149.7 725.0V731.500" stroke="#d0d0d0" stroke-width="1.300"/>
<text x="1189.0" y="743.800" font-size="15.800" fill="#d2d2d2" text-anchor="middle">100%</text>
<path d="M1228.2 725.0V731.500" stroke="#d0d0d0" stroke-width="1.300"/>
</svg>
<svg width="1920" height="1080" viewBox="0 0 1920 1080">
<defs><linearGradient id="ol" x1="0" y1="0" x2="0" y2="1"><stop offset="0" stop-color="#7b7b4e"/><stop offset=".3" stop-color="#4c4c1a"/><stop offset="1" stop-color="#3c3c14"/></linearGradient></defs>
<rect x="1296.0" y="218.3" width="148.0" height="506.0" fill="#242424"/>
<text x="1355.5" y="212" font-size="16.600" fill="#d2d2d2" text-anchor="middle">Delta L</text>
<path d="M1289.0 219.60H1295.0" stroke="#d8d8d8" stroke-width="1.400"/>
<text x="1288.8" y="225.7" font-size="17" fill="#d2d2d2" text-anchor="end">15</text>
<path d="M1296.0 303.90H1444.0" stroke="#848484" stroke-width="1.700"/>
<path d="M1289.0 303.90H1295.0" stroke="#d8d8d8" stroke-width="1.400"/>
<text x="1288.8" y="310.0" font-size="17" fill="#d2d2d2" text-anchor="end">10</text>
<path d="M1296.0 388.30H1444.0" stroke="#848484" stroke-width="1.700"/>
<path d="M1289.0 388.30H1295.0" stroke="#d8d8d8" stroke-width="1.400"/>
<text x="1288.8" y="394.4" font-size="17" fill="#d2d2d2" text-anchor="end">5</text>
<path d="M1296.0 472.70H1444.0" stroke="#848484" stroke-width="1.700"/>
<path d="M1289.0 472.70H1295.0" stroke="#d8d8d8" stroke-width="1.400"/>
<text x="1288.8" y="478.8" font-size="17" fill="#d2d2d2" text-anchor="end">0</text>
<path d="M1296.0 557.10H1444.0" stroke="#848484" stroke-width="1.700"/>
<path d="M1289.0 557.10H1295.0" stroke="#d8d8d8" stroke-width="1.400"/>
<text x="1288.8" y="563.2" font-size="17" fill="#d2d2d2" text-anchor="end">-5</text>
<path d="M1296.0 641.50H1444.0" stroke="#848484" stroke-width="1.700"/>
<path d="M1289.0 641.50H1295.0" stroke="#d8d8d8" stroke-width="1.400"/>
<text x="1288.8" y="647.6" font-size="17" fill="#d2d2d2" text-anchor="end">-10</text>
<path d="M1289.0 724.60H1295.0" stroke="#d8d8d8" stroke-width="1.400"/>
<text x="1288.8" y="730.7" font-size="17" fill="#d2d2d2" text-anchor="end">-15</text>
<rect x="1310.8" y="471.9" width="118.7" height="8.6" fill="url(#ol)" stroke="#000" stroke-width="1.200"/>
<path d="M1296.0 302.20H1444.0" stroke="#f01010" stroke-width="1.9"/>
<path d="M1296.0 640.60H1444.0" stroke="#f01010" stroke-width="1.9"/>
<path d="M1296.0 420.64H1444.0" stroke="#f8f800" stroke-width="1.6"/>
<path d="M1296.0 522.16H1444.0" stroke="#f8f800" stroke-width="1.6"/>
<path d="M1296.0 454.48H1444.0" stroke="#088008" stroke-width="1.4"/>
<path d="M1296.0 488.32H1444.0" stroke="#088008" stroke-width="1.4"/>
<rect x="1296.0" y="218.3" width="148.0" height="506.0" fill="none" stroke="#989898" stroke-width="2.200"/>
<path d="M1296.0 724.3V731.500M1444.0 724.3V731.500" stroke="#d0d0d0" stroke-width="1.300"/>
<text x="1370.0" y="743.800" font-size="15.800" fill="#d2d2d2" text-anchor="middle">100%</text>
<rect x="1513.0" y="218.3" width="148.4" height="506.0" fill="#242424"/>
<text x="1572.7" y="212" font-size="16.600" fill="#d2d2d2" text-anchor="middle">Delta C</text>
<path d="M1506.0 219.60H1512.0" stroke="#d8d8d8" stroke-width="1.400"/>
<text x="1505.8" y="225.7" font-size="17" fill="#d2d2d2" text-anchor="end">15</text>
<path d="M1513.0 303.90H1661.4" stroke="#848484" stroke-width="1.700"/>
<path d="M1506.0 303.90H1512.0" stroke="#d8d8d8" stroke-width="1.400"/>
<text x="1505.8" y="310.0" font-size="17" fill="#d2d2d2" text-anchor="end">10</text>
<path d="M1513.0 388.30H1661.4" stroke="#848484" stroke-width="1.700"/>
<path d="M1506.0 388.30H1512.0" stroke="#d8d8d8" stroke-width="1.400"/>
<text x="1505.8" y="394.4" font-size="17" fill="#d2d2d2" text-anchor="end">5</text>
<path d="M1513.0 472.70H1661.4" stroke="#848484" stroke-width="1.700"/>
<path d="M1506.0 472.70H1512.0" stroke="#d8d8d8" stroke-width="1.400"/>
<text x="1505.8" y="478.8" font-size="17" fill="#d2d2d2" text-anchor="end">0</text>
<path d="M1513.0 557.10H1661.4" stroke="#848484" stroke-width="1.700"/>
<path d="M1506.0 557.10H1512.0" stroke="#d8d8d8" stroke-width="1.400"/>
<text x="1505.8" y="563.2" font-size="17" fill="#d2d2d2" text-anchor="end">-5</text>
<path d="M1513.0 641.50H1661.4" stroke="#848484" stroke-width="1.700"/>
<path d="M1506.0 641.50H1512.0" stroke="#d8d8d8" stroke-width="1.400"/>
<text x="1505.8" y="647.6" font-size="17" fill="#d2d2d2" text-anchor="end">-10</text>
<path d="M1506.0 724.60H1512.0" stroke="#d8d8d8" stroke-width="1.400"/>
<text x="1505.8" y="730.7" font-size="17" fill="#d2d2d2" text-anchor="end">-15</text>
<rect x="1527.9" y="471.9" width="117.6" height="23.7" fill="url(#ol)" stroke="#000" stroke-width="1.200"/>
<path d="M1513.0 302.20H1661.4" stroke="#f01010" stroke-width="1.9"/>
<path d="M1513.0 640.60H1661.4" stroke="#f01010" stroke-width="1.9"/>
<path d="M1513.0 420.64H1661.4" stroke="#f8f800" stroke-width="1.6"/>
<path d="M1513.0 522.16H1661.4" stroke="#f8f800" stroke-width="1.6"/>
<path d="M1513.0 454.48H1661.4" stroke="#088008" stroke-width="1.4"/>
<path d="M1513.0 488.32H1661.4" stroke="#088008" stroke-width="1.4"/>
<rect x="1513.0" y="218.3" width="148.4" height="506.0" fill="none" stroke="#989898" stroke-width="2.200"/>
<path d="M1513.0 724.3V731.500M1661.4 724.3V731.500" stroke="#d0d0d0" stroke-width="1.300"/>
<text x="1587.2" y="743.800" font-size="15.800" fill="#d2d2d2" text-anchor="middle">100%</text>
<rect x="1729.3" y="218.3" width="148.8" height="506.0" fill="#242424"/>
<text x="1789.2" y="212" font-size="16.600" fill="#d2d2d2" text-anchor="middle">Delta H</text>
<path d="M1722.3 219.60H1728.3" stroke="#d8d8d8" stroke-width="1.400"/>
<text x="1722.1" y="225.7" font-size="17" fill="#d2d2d2" text-anchor="end">15</text>
<path d="M1729.3 303.90H1878.1" stroke="#848484" stroke-width="1.700"/>
<path d="M1722.3 303.90H1728.3" stroke="#d8d8d8" stroke-width="1.400"/>
<text x="1722.1" y="310.0" font-size="17" fill="#d2d2d2" text-anchor="end">10</text>
<path d="M1729.3 388.30H1878.1" stroke="#848484" stroke-width="1.700"/>
<path d="M1722.3 388.30H1728.3" stroke="#d8d8d8" stroke-width="1.400"/>
<text x="1722.1" y="394.4" font-size="17" fill="#d2d2d2" text-anchor="end">5</text>
<path d="M1729.3 472.70H1878.1" stroke="#848484" stroke-width="1.700"/>
<path d="M1722.3 472.70H1728.3" stroke="#d8d8d8" stroke-width="1.400"/>
<text x="1722.1" y="478.8" font-size="17" fill="#d2d2d2" text-anchor="end">0</text>
<path d="M1729.3 557.10H1878.1" stroke="#848484" stroke-width="1.700"/>
<path d="M1722.3 557.10H1728.3" stroke="#d8d8d8" stroke-width="1.400"/>
<text x="1722.1" y="563.2" font-size="17" fill="#d2d2d2" text-anchor="end">-5</text>
<path d="M1729.3 641.50H1878.1" stroke="#848484" stroke-width="1.700"/>
<path d="M1722.3 641.50H1728.3" stroke="#d8d8d8" stroke-width="1.400"/>
<text x="1722.1" y="647.6" font-size="17" fill="#d2d2d2" text-anchor="end">-10</text>
<path d="M1722.3 724.60H1728.3" stroke="#d8d8d8" stroke-width="1.400"/>
<text x="1722.1" y="730.7" font-size="17" fill="#d2d2d2" text-anchor="end">-15</text>
<rect x="1744.7" y="471.9" width="117.9" height="29.1" fill="url(#ol)" stroke="#000" stroke-width="1.200"/>
<path d="M1729.3 302.20H1878.1" stroke="#f01010" stroke-width="1.9"/>
<path d="M1729.3 640.60H1878.1" stroke="#f01010" stroke-width="1.9"/>
<path d="M1729.3 420.64H1878.1" stroke="#f8f800" stroke-width="1.6"/>
<path d="M1729.3 522.16H1878.1" stroke="#f8f800" stroke-width="1.6"/>
<path d="M1729.3 454.48H1878.1" stroke="#088008" stroke-width="1.4"/>
<path d="M1729.3 488.32H1878.1" stroke="#088008" stroke-width="1.4"/>
<rect x="1729.3" y="218.3" width="148.8" height="506.0" fill="none" stroke="#989898" stroke-width="2.200"/>
<path d="M1729.3 724.3V731.500M1878.1 724.3V731.500" stroke="#d0d0d0" stroke-width="1.300"/>
<text x="1803.7" y="743.800" font-size="15.800" fill="#d2d2d2" text-anchor="middle">100%</text>
</svg>
<svg width="1920" height="1080" viewBox="0 0 1920 1080">
<defs>
<linearGradient id="qr" x1="0" y1="0" x2="0" y2="1"><stop offset="0" stop-color="#ff5c5c"/><stop offset="1" stop-color="#ff4242"/></linearGradient>
<linearGradient id="qgn" x1="0" y1="0" x2="0" y2="1"><stop offset="0" stop-color="#5cb05c"/><stop offset="1" stop-color="#4aa44a"/></linearGradient>
<linearGradient id="qbl" x1="0" y1="0" x2="0" y2="1"><stop offset="0" stop-color="#5a5aff"/><stop offset="1" stop-color="#4040ff"/></linearGradient>
</defs>
<rect x="1122.2" y="853.6" width="755.6" height="127.1" fill="#242424"/>
<text x="1482.300" y="846.500" font-size="16.200" fill="#d2d2d2" text-anchor="middle">RGB Balance</text>
<path d="M1122.2 917.2H1877.8" stroke="#848484" stroke-width="1.800"/>
<path d="M1114.2 854.2H1121.0" stroke="#d8d8d8" stroke-width="1.400"/>
<text x="1114.2" y="860.5" font-size="17" fill="#d2d2d2" text-anchor="end">105</text>
<path d="M1114.2 917.2H1121.0" stroke="#d8d8d8" stroke-width="1.400"/>
<text x="1114.2" y="923.5" font-size="17" fill="#d2d2d2" text-anchor="end">100</text>
<path d="M1114.2 980.5H1121.0" stroke="#d8d8d8" stroke-width="1.400"/>
<text x="1114.2" y="986.8" font-size="17" fill="#d2d2d2" text-anchor="end">95</text>
<rect x="1197.5" y="915.5" width="199.5" height="65.2" fill="url(#qr)" stroke="#000" stroke-width="1.2"/>
<rect x="1398.0" y="928.5" width="200.0" height="52.2" fill="url(#qgn)" stroke="#000" stroke-width="1.2"/>
<rect x="1599.0" y="917.3" width="200.0" height="63.4" fill="url(#qbl)" stroke="#000" stroke-width="1.2"/>
<rect x="1122.2" y="853.6" width="755.6" height="127.1" fill="none" stroke="#989898" stroke-width="2.400"/>
<path d="M1121.6 980.7V987M1878.2 980.7V987" stroke="#d0d0d0" stroke-width="1.300"/>
<text x="1499" y="998.500" font-size="15.800" fill="#d2d2d2" text-anchor="middle">100%</text>
</svg>
<style>#tb{left:20px;top:763px;width:634px;height:215px;background:#000;font-family:"DejaVu Sans","Liberation Sans",sans-serif;font-size:15.500px;color:#f4f4f4;text-shadow:0 1px 1px rgba(0,0,0,.5)}
#tb table{position:absolute;left:1px;top:1px;width:632px;table-layout:fixed;border-spacing:0}
#tb td,#tb th{padding:0;height:26.400px;text-align:center;font-weight:normal;white-space:nowrap;overflow:visible}
#tb th{height:28.600px;font-size:15px}
#tb thead tr{background:linear-gradient(#3a3a3a 0,#2e2e2e 46%,#121212 47%,#1e1e1e 100%)}
#tb td:first-child{text-align:left;padding-left:18.500px;font-weight:bold;font-size:16px}
#tb td{text-align:left;padding-left:4.600px}#tb td span,#tb th span{display:inline-block;position:relative;top:1px;transform-origin:0 50%;transform:scaleX(1.345)}#tb th span{transform-origin:50% 50%;transform:scaleX(1.330)}#tb td:first-child span{transform-origin:0 50%;transform:scaleX(1.300)}
#tb sup{font-size:10.500px;line-height:0;vertical-align:5.500px}#tb tr.d{background:#404040}#tb tr.l{background:#808080;color:#ececec}</style>
<div id="tb" class="abs"><table><colgroup>
<col style="width:205.50px">
<col style="width:95.70px">
<col style="width:82.50px">
<col style="width:82.50px">
<col style="width:82.50px">
<col style="width:83.30px">
</colgroup><thead><tr><th></th><th><span>20%</span></th><th><span>40%</span></th><th><span>60%</span></th><th><span>80%</span></th><th><span>100%</span></th></tr></thead><tbody>
<tr class="d"><td><span style="transform:scaleX(1.292)">Target Y cd/m<sup>2</sup></span></td><td><span>10.0326</span></td><td><span>9.8994</span></td><td><span>9.6261</span></td><td><span>9.5418</span></td><td><span>9.4671</span></td></tr>
<tr class="l"><td><span style="transform:scaleX(1.226)">Target x:CIE31</span></td><td><span>0.3391</span></td><td><span>0.3640</span></td><td><span>0.3850</span></td><td><span>0.4092</span></td><td><span>0.4349</span></td></tr>
<tr class="d"><td><span style="transform:scaleX(1.226)">Target y:CIE31</span></td><td><span>0.3702</span></td><td><span>0.4089</span></td><td><span>0.4576</span></td><td><span>0.4969</span></td><td><span>0.5385</span></td></tr>
<tr class="l"><td><span style="transform:scaleX(1.206)">x: CIE31</span></td><td><span>0.3388</span></td><td><span>0.3616</span></td><td><span>0.3886</span></td><td><span>0.4232</span></td><td><span>0.4547</span></td></tr>
<tr class="d"><td><span style="transform:scaleX(1.206)">y: CIE31</span></td><td><span>0.3703</span></td><td><span>0.4106</span></td><td><span>0.4571</span></td><td><span>0.4892</span></td><td><span>0.5158</span></td></tr>
<tr class="l"><td><span style="transform:scaleX(1.325)">Y cd/m<sup>2</sup></span></td><td><span>9.6090</span></td><td><span>9.1725</span></td><td><span>9.2034</span></td><td><span>8.7503</span></td><td><span>8.5837</span></td></tr>
<tr class="d"><td><span style="transform:scaleX(1.249)">ΔE 2000</span></td><td><span>0.1851</span></td><td><span>0.4367</span></td><td><span>0.4691</span></td><td><span>1.5856</span></td><td><span>2.5680</span></td></tr>
</tbody></table></div>
<svg width="1920" height="1080" viewBox="0 0 1920 1080" font-size="32.800" fill="#f2f2f2">
<text x="680.5" y="798.300" textLength="249.0">x: CIE31: 0.4547</text>
<text x="993.8" y="798.300" textLength="249.7">y: CIE31: 0.5158</text>
<text x="1332.1" y="798.300" textLength="208.7">Y cd/m<tspan dy="-13.200" font-size="18.500">2</tspan><tspan dy="13.200">: 8.58</tspan></text>
<text x="1653.0" y="798.300" textLength="194.0">ΔE 2000: 2.6</text>
</svg>
<div id="bottom" class="abs"></div>
<div class="abs sw" style="left:1px;width:45px"><b style="left:5px;top:26px;width:35px;height:31px;background:#ff0;border-color:#cc0;box-shadow:none"></b><em style="position:absolute;left:14px;top:1.500px;width:17px;height:17px;border-radius:9px;background:linear-gradient(#7c7c7c,#a8a8a8)"></em></div>
<div class="abs sw" style="left:52px"><b style="background:#4c4c45"></b><span>20%</span></div>
<div class="abs sw" style="left:204px"><b style="background:#4b4d40"></b><span>40%</span></div>
<div class="abs sw" style="left:356px"><b style="background:#4b4e39"></b><span>60%</span></div>
<div class="abs sw" style="left:508px"><b style="background:#4c4e2f"></b><span>80%</span></div>
<div class="abs sw sel" style="left:660px"><b style="background:#494914"></b><span>100%</span></div>
<div class="cb" style="left:1597px;top:1018px;width:48px;height:18px"></div>
<div class="cb" style="left:1597px;top:1037px;width:48px;height:43px;border-radius:0 0 5px 5px"></div>
<div class="cb" style="left:1646px;top:1018px;width:46px;height:30px;border-radius:0"><div class="c"></div></div>
<div class="cb" style="left:1692px;top:1018px;width:46px;height:30px;border-radius:0"><div class="c"></div></div>
<div class="cb" style="left:1737px;top:1018px;width:46px;height:30px;border-radius:0"><div class="c"></div></div>
<div class="cb" style="left:1782px;top:1018px;width:46px;height:30px;border-radius:0"><div class="c"></div></div>
<div class="cb dk" style="left:1827px;top:1018px;width:46px;height:30px;border-radius:0"><div class="c"></div></div>
<div class="cb dk" style="left:1872px;top:1018px;width:48px;height:30px;border-radius:0"><div class="c"></div></div>
<div class="cb" style="left:1646px;top:1049px;width:136px;height:30px;border-radius:5px 0 0 0"></div>
<div class="cb" style="left:1782px;top:1049px;width:136px;height:30px;border-radius:0 5px 0 0"></div>
<svg width="1920" height="1080" viewBox="0 0 1920 1080">
<path d="M19.500 1030H28.500L24 1025.500Z" fill="#2c2c2c"/>
<circle cx="1621" cy="1027.500" r="7" fill="#8e8e8e"/><path d="M1616.500 1029.500H1625.500L1621 1024.500Z" fill="#333"/>
<rect x="1607.500" y="1043.500" width="27" height="27" rx="4" fill="#999" stroke="#333" stroke-width="2.2"/><rect x="1613" y="1049" width="16" height="16" fill="#000"/><rect x="1614.500" y="1050.500" width="13" height="7" fill="#3a3a3a"/>
<rect x="1664" y="1027.500" width="9" height="9" rx="1" fill="#2a2a2a"/>
<path d="M1711 1027L1720 1032.500L1711 1038Z" fill="#2a2a2a"/>
<g fill="none" stroke="#2a2a2a" stroke-width="1.6"><path d="M1756.500 1027.500H1754.500V1037.500H1756.500M1763.500 1027.500H1765.500V1037.500H1763.500"/></g><path d="M1757 1032.500H1763" stroke="#2a2a2a" stroke-width="1.6" stroke-dasharray="1.5 1.2"/>
<path d="M1805 1032.500c-2-3.500-6.500-3.500-6.500 0s4.500 3.500 6.500 0c2-3.500 6.500-3.500 6.500 0s-4.500 3.500-6.500 0z" fill="none" stroke="#2a2a2a" stroke-width="1.6"/>
<g fill="none" stroke="#1a1a1a" stroke-width="2"><path d="M1844.500 1031a5.500 5.500 0 0 1 10-2.500M1855.500 1034a5.500 5.500 0 0 1-10 2.500"/></g><path d="M1856.500 1025v5h-5zM1843.500 1040v-5h5z" fill="#1a1a1a"/>
<path d="M1889.500 1032.500l4 4l7-8" fill="none" stroke="#1a1a1a" stroke-width="2.6"/>
<circle cx="1677" cy="1063.500" r="10" fill="#8c8c8c"/><path d="M1677.500 1058.500l-4.500 5l4.500 5M1683 1058.500l-4.500 5l4.500 5" fill="none" stroke="#2a2a2a" stroke-width="1.8"/>
<circle cx="1890" cy="1063.500" r="10" fill="#8c8c8c"/><path d="M1884.500 1058.500l4.500 5l-4.500 5M1890 1058.500l4.500 5l-4.500 5" fill="none" stroke="#2a2a2a" stroke-width="1.8"/>
<text x="1702.500" y="1072.300" font-size="21.300" fill="#2c2c2c" stroke="#2c2c2c" stroke-width=".55" textLength="52.500" lengthAdjust="spacingAndGlyphs">Back</text>
<text x="1809" y="1072.300" font-size="21.300" fill="#2c2c2c" stroke="#2c2c2c" stroke-width=".55" textLength="53.500" lengthAdjust="spacingAndGlyphs">Next</text>
</svg>
</body></html>
